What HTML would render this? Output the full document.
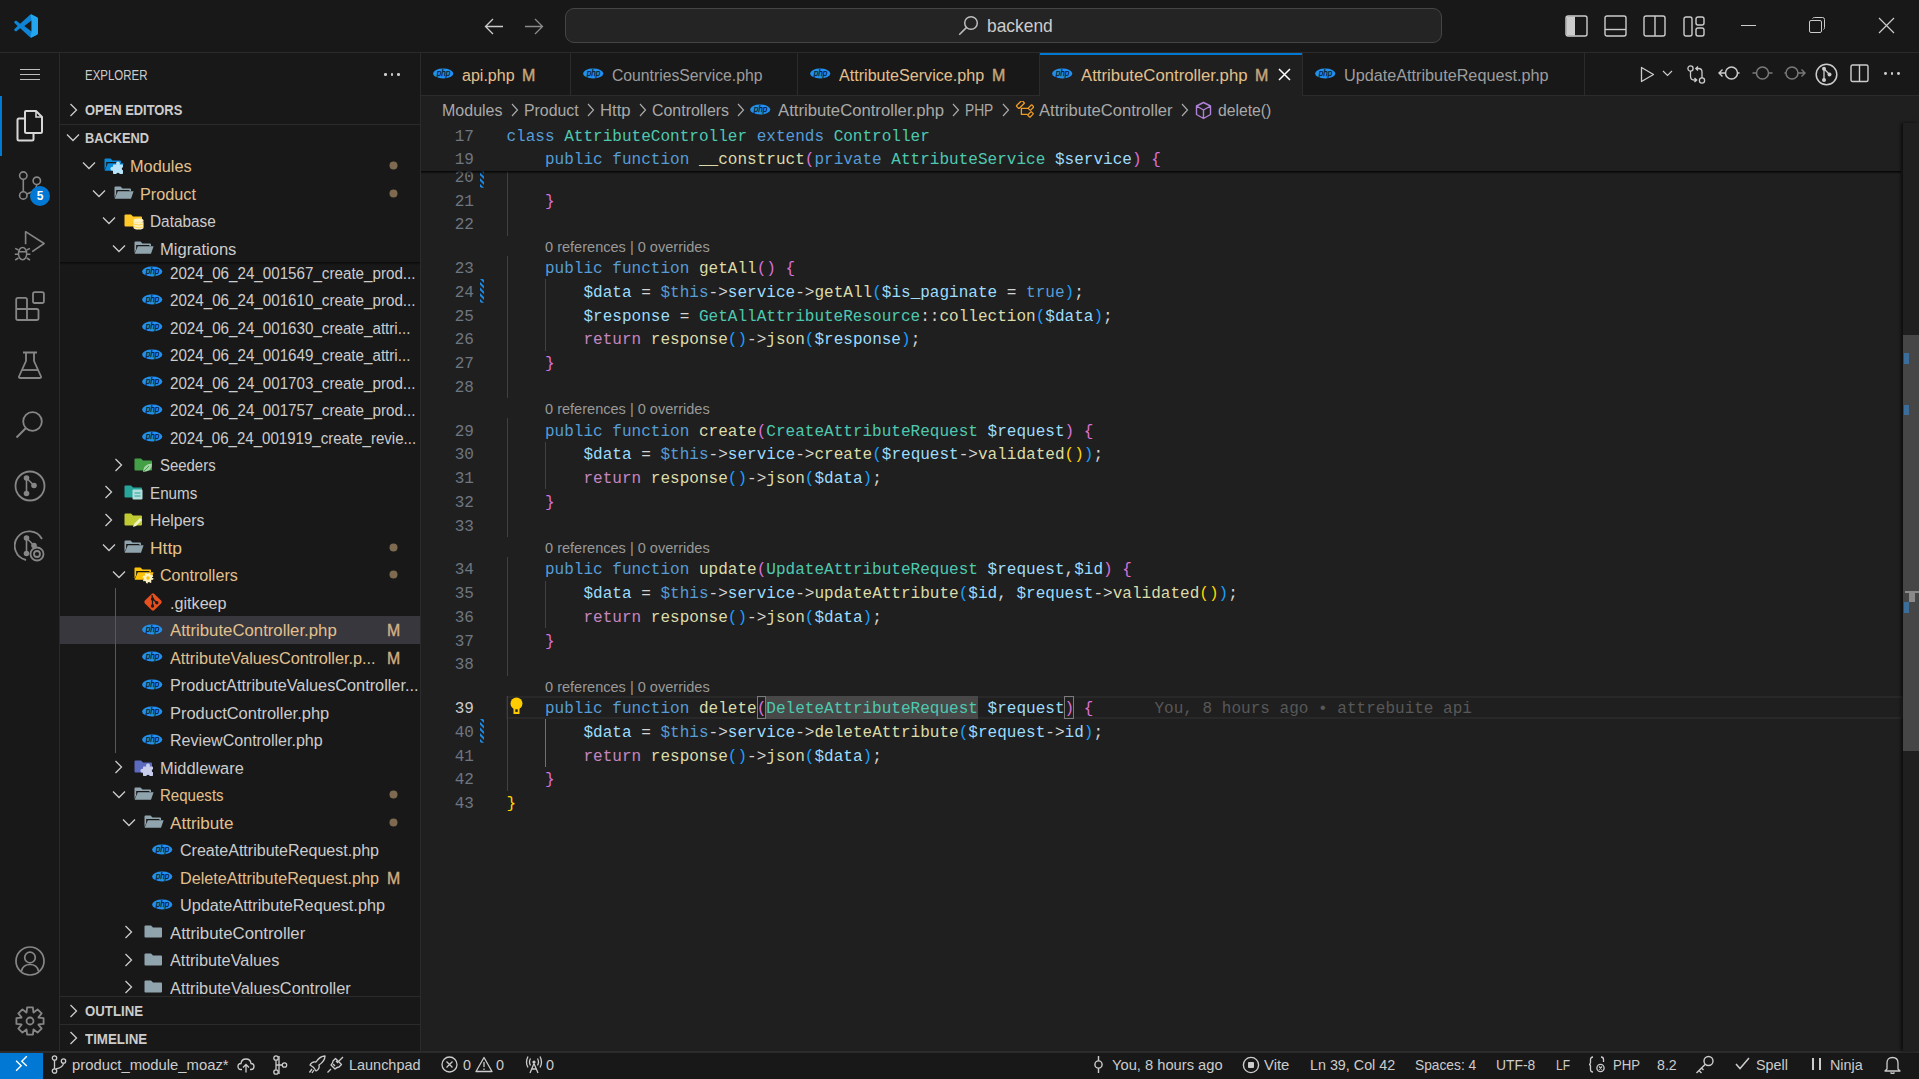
<!DOCTYPE html>
<html><head><meta charset="utf-8"><style>
html,body{margin:0;padding:0;width:1919px;height:1079px;overflow:hidden;background:#1f1f1f;position:relative;}
*{box-sizing:border-box;}
</style></head><body>
<div style="position:absolute;left:0px;top:0px;width:1919px;height:52px;background:#181818;"></div><div style="position:absolute;left:0px;top:52px;width:1919px;height:1px;background:#2b2b2b;"></div><div style="position:absolute;left:0px;top:53px;width:59px;height:998px;background:#181818;"></div><div style="position:absolute;left:59px;top:53px;width:1px;height:998px;background:#2b2b2b;"></div><div style="position:absolute;left:60px;top:53px;width:360px;height:998px;background:#181818;"></div><div style="position:absolute;left:420px;top:53px;width:1px;height:998px;background:#2b2b2b;"></div><div style="position:absolute;left:421px;top:53px;width:1498px;height:998px;background:#1f1f1f;"></div><div style="position:absolute;left:0px;top:1051px;width:1919px;height:1.5px;background:#2b2b2b;"></div><div style="position:absolute;left:0px;top:1052.5px;width:1919px;height:26.5px;background:#181818;"></div><svg style="position:absolute;left:14px;top:14px;" width="24" height="24" viewBox="0 0 24 24" fill="none">
<path d="M17.5 0.6 L23 3.2 Q24 3.8 24 5 V19 Q24 20.2 23 20.8 L17.5 23.4 Q16.6 23.8 15.8 23.1 L6.2 14.3 L2.4 17.2 Q1.8 17.6 1.2 17.1 L0.3 16.3 Q-0.1 15.8 0.3 15.3 L3.6 12 L0.3 8.7 Q-0.1 8.2 0.3 7.7 L1.2 6.9 Q1.8 6.4 2.4 6.8 L6.2 9.7 L15.8 0.9 Q16.6 0.2 17.5 0.6 Z M17.6 6.5 L10.3 12 L17.6 17.5 Z" fill="#0e84d4"/>
<path d="M17.5 0.6 L23 3.2 Q24 3.8 24 5 V19 Q24 20.2 23 20.8 L17.5 23.4 Q17 23.6 16.5 23.5 L17.6 17.5 V6.5 L16.5 0.5 Q17 0.4 17.5 0.6Z" fill="#24a6ee"/>
</svg><svg style="position:absolute;left:484px;top:18px;" width="20" height="17" viewBox="0 0 20 17" fill="none"><path d="M9 1 L1.5 8.5 L9 16 M1.5 8.5 H19" stroke="#cccccc" stroke-width="1.3"/></svg><svg style="position:absolute;left:524px;top:18px;" width="20" height="17" viewBox="0 0 20 17" fill="none"><path d="M11 1 L18.5 8.5 L11 16 M18.5 8.5 H1" stroke="#8a8a8a" stroke-width="1.3"/></svg><div style="position:absolute;left:565px;top:8px;width:877px;height:35px;background:#242424;border:1px solid #454545;border-radius:9px;"></div><svg style="position:absolute;left:958px;top:15px;" width="21" height="21" viewBox="0 0 21 21" fill="none"><circle cx="13" cy="8" r="6.3" stroke="#bdbdbd" stroke-width="1.5"/><path d="M8.6 12.4 L1.2 19.8" stroke="#bdbdbd" stroke-width="1.6"/></svg><div style="position:absolute;left:987px;top:15.100000000000001px;height:22px;line-height:22px;font-family:'Liberation Sans', sans-serif;font-size:19px;font-weight:normal;color:#cccccc;white-space:pre;transform:scaleX(0.9159);transform-origin:0 0;">backend</div><svg style="position:absolute;left:1565px;top:15px;" width="23" height="22" viewBox="0 0 23 22" fill="none"><rect x="1" y="1" width="21" height="20" rx="2" stroke="#cccccc" stroke-width="1.4"/><rect x="1.5" y="1.5" width="8.5" height="19" fill="#cccccc"/></svg><svg style="position:absolute;left:1604px;top:15px;" width="23" height="22" viewBox="0 0 23 22" fill="none"><rect x="1" y="1" width="21" height="20" rx="2" stroke="#cccccc" stroke-width="1.4"/><path d="M1 14.5 H22" stroke="#cccccc" stroke-width="1.4"/></svg><svg style="position:absolute;left:1643px;top:15px;" width="23" height="22" viewBox="0 0 23 22" fill="none"><rect x="1" y="1" width="21" height="20" rx="2" stroke="#cccccc" stroke-width="1.4"/><path d="M12 1 V21" stroke="#cccccc" stroke-width="1.4"/></svg><svg style="position:absolute;left:1683px;top:16px;" width="22" height="21" viewBox="0 0 22 21" fill="none"><rect x="1" y="1" width="8" height="19" rx="2" stroke="#cccccc" stroke-width="1.4"/><rect x="13" y="1" width="8" height="8" rx="2" stroke="#cccccc" stroke-width="1.4"/><rect x="13" y="12" width="8" height="8" rx="2" stroke="#cccccc" stroke-width="1.4"/></svg><div style="position:absolute;left:1741px;top:25px;width:15px;height:1px;background:#cccccc;"></div><svg style="position:absolute;left:1809px;top:17px;" width="17" height="17" viewBox="0 0 17 17" fill="none"><rect x="0.5" y="3.5" width="12" height="12" rx="1.5" stroke="#cccccc" stroke-width="1"/><path d="M3.5 1.5 Q4 0.5 5.5 0.5 H13.5 Q15.5 0.5 15.5 2.5 V10.5 Q15.5 12 14.5 12.5" stroke="#cccccc" stroke-width="1"/></svg><svg style="position:absolute;left:1878px;top:17px;" width="17" height="17" viewBox="0 0 17 17" fill="none"><path d="M1 1 L16 16 M16 1 L1 16" stroke="#cccccc" stroke-width="1.2"/></svg><div style="position:absolute;left:20px;top:69.0px;width:20px;height:1.2px;background:#bdbdbd;"></div><div style="position:absolute;left:20px;top:74.0px;width:20px;height:1.2px;background:#bdbdbd;"></div><div style="position:absolute;left:20px;top:79.0px;width:20px;height:1.2px;background:#bdbdbd;"></div><div style="position:absolute;left:0px;top:96px;width:2px;height:60px;background:#0078d4;"></div><svg style="position:absolute;left:16px;top:110px;" width="28" height="32" viewBox="0 0 28 32" fill="none"><path d="M9 2 Q9 1 10 1 H20 L26 7 V21.5 Q26 23 24.5 23 H10.5 Q9 23 9 21.5 Z" stroke="#d7d7d7" stroke-width="2" stroke-linejoin="round"/>
<path d="M20 1.5 V7 H25.5" stroke="#d7d7d7" stroke-width="1.6"/>
<path d="M9 8.5 H3 Q1.5 8.5 1.5 10 V29 Q1.5 30.5 3 30.5 H16 Q17.5 30.5 17.5 29 V23" stroke="#d7d7d7" stroke-width="2" stroke-linejoin="round"/></svg><svg style="position:absolute;left:16px;top:168px;" width="30" height="34" viewBox="0 0 30 34" fill="none"><circle cx="7.3" cy="7.6" r="3.7" stroke="#868686" stroke-width="1.6"/>
<circle cx="7.3" cy="27.4" r="3.7" stroke="#868686" stroke-width="1.6"/>
<circle cx="20.8" cy="12.8" r="3.7" stroke="#868686" stroke-width="1.6"/>
<path d="M7.3 11.3 V23.7 M20.8 16.5 Q20.8 23 10.8 26" stroke="#868686" stroke-width="1.6"/></svg><div style="position:absolute;left:30px;top:186px;width:20px;height:20px;border-radius:50%;background:#0078d4;color:#fff;font-family:'Liberation Sans',sans-serif;font-size:12px;font-weight:bold;line-height:20px;text-align:center;">5</div><svg style="position:absolute;left:14px;top:229px;" width="32" height="34" viewBox="0 0 32 34" fill="none"><path d="M11.6 15.3 V2.7 L30.1 14.5 L18.2 22.7" stroke="#868686" stroke-width="1.6" stroke-linejoin="round"/>
<ellipse cx="8.6" cy="24.6" rx="4.1" ry="6.2" stroke="#868686" stroke-width="1.5"/>
<path d="M4.6 22.7 H12.6 M1.2 19.4 L4.5 21 M16 19.4 L12.7 21 M0.8 25.3 H4.5 M16.4 25.3 H12.7 M1.2 31 L4.5 29 M16 31 L12.7 29" stroke="#868686" stroke-width="1.5"/></svg><svg style="position:absolute;left:14px;top:290px;" width="32" height="32" viewBox="0 0 32 32" fill="none"><path d="M4 7.8 H11.2 Q13 7.8 13 9.6 V19 H22.7 Q24.5 19 24.5 20.8 V28.2 Q24.5 30 22.7 30 H4 Q2.2 30 2.2 28.2 V9.6 Q2.2 7.8 4 7.8 Z M2.2 19 H13 V30" stroke="#868686" stroke-width="1.8" stroke-linejoin="round"/>
<rect x="19" y="2.2" width="10.9" height="10.8" rx="1.8" stroke="#868686" stroke-width="1.8"/></svg><svg style="position:absolute;left:17px;top:351px;" width="26" height="30" viewBox="0 0 26 30" fill="none"><path d="M6 1.5 H20 M9 2 V10 L2 25.5 Q1.5 27 3 27 H23 Q24.5 27 24 25.5 L17 10 V2" stroke="#868686" stroke-width="1.8" stroke-linejoin="round"/>
<path d="M5 19 H21" stroke="#868686" stroke-width="1.8"/></svg><svg style="position:absolute;left:15px;top:410px;" width="30" height="30" viewBox="0 0 30 30" fill="none"><circle cx="17.5" cy="11.5" r="9.3" stroke="#868686" stroke-width="1.8"/>
<path d="M11 18 L1.5 27.5" stroke="#868686" stroke-width="1.9"/></svg><svg style="position:absolute;left:14px;top:470px;" width="32" height="32" viewBox="0 0 32 32" fill="none"><circle cx="16" cy="16" r="14.5" stroke="#868686" stroke-width="1.8"/>
<circle cx="12.5" cy="8" r="2.8" fill="#868686"/><circle cx="20" cy="15.5" r="2.8" fill="#868686"/><circle cx="12.5" cy="23.5" r="2.8" fill="#868686"/>
<path d="M12.5 8 V23.5 M12.5 8 L20 15.5" stroke="#868686" stroke-width="1.6"/></svg><svg style="position:absolute;left:14px;top:530px;" width="34" height="34" viewBox="0 0 34 34" fill="none"><path d="M28 9 A14.5 14.5 0 1 0 12 30" stroke="#868686" stroke-width="1.8"/>
<circle cx="12.5" cy="8" r="2.8" fill="#868686"/><circle cx="20" cy="15.5" r="2.8" fill="#868686"/><circle cx="12.5" cy="23.5" r="2.8" fill="#868686"/>
<path d="M12.5 8 V23.5 M12.5 8 L20 15.5" stroke="#868686" stroke-width="1.6"/>
<circle cx="23" cy="24" r="6.5" fill="#181818" stroke="#868686" stroke-width="1.8"/><circle cx="23" cy="24" r="3" stroke="#868686" stroke-width="1.8"/></svg><svg style="position:absolute;left:15px;top:946px;" width="30" height="30" viewBox="0 0 30 30" fill="none"><circle cx="15" cy="15" r="14" stroke="#868686" stroke-width="1.7"/>
<circle cx="15" cy="11.5" r="5.3" stroke="#868686" stroke-width="1.7"/>
<path d="M6.5 25 Q8 18.5 15 18.5 Q22 18.5 23.5 25" stroke="#868686" stroke-width="1.7"/></svg><svg style="position:absolute;left:15px;top:1005.8px;" width="30" height="30" viewBox="0 0 30 30" fill="none"><polygon points="12.10,1.41 17.90,1.41 18.41,6.46 18.62,6.54 22.56,3.34 26.66,7.44 23.45,11.37 23.54,11.58 28.59,12.10 28.59,17.90 23.54,18.41 23.46,18.62 26.66,22.56 22.56,26.66 18.63,23.45 18.42,23.54 17.90,28.59 12.10,28.59 11.59,23.54 11.38,23.46 7.44,26.66 3.34,22.56 6.55,18.63 6.46,18.42 1.41,17.90 1.41,12.10 6.46,11.59 6.54,11.38 3.34,7.44 7.44,3.34 11.37,6.55 11.58,6.46" stroke="#868686" stroke-width="1.8" stroke-linejoin="round"/><circle cx="15" cy="15" r="3.5" stroke="#868686" stroke-width="1.8"/></svg><div style="position:absolute;left:85px;top:64.5px;height:20px;line-height:20px;font-family:'Liberation Sans', sans-serif;font-size:14px;font-weight:normal;color:#cccccc;white-space:pre;transform:scaleX(0.8197);transform-origin:0 0;">EXPLORER</div><div style="position:absolute;left:384px;top:73px;width:2.6px;height:2.6px;background:#cccccc;border-radius:50%;"></div><div style="position:absolute;left:390.5px;top:73px;width:2.6px;height:2.6px;background:#cccccc;border-radius:50%;"></div><div style="position:absolute;left:397px;top:73px;width:2.6px;height:2.6px;background:#cccccc;border-radius:50%;"></div><svg style="position:absolute;left:68.5px;top:102.5px;" width="9" height="14" viewBox="0 0 9 14" fill="none"><path d="M1.5 1 L7.5 7 L1.5 13" stroke="#cccccc" stroke-width="1.3"/></svg><div style="position:absolute;left:85px;top:100.0px;height:20px;line-height:20px;font-family:'Liberation Sans', sans-serif;font-size:14px;font-weight:bold;color:#cccccc;white-space:pre;transform:scaleX(0.9219);transform-origin:0 0;">OPEN EDITORS</div><div style="position:absolute;left:60px;top:124px;width:360px;height:1px;background:#2b2b2b;"></div><svg style="position:absolute;left:66px;top:133.0px;" width="14" height="9" viewBox="0 0 14 9" fill="none"><path d="M1 1.5 L7 7.5 L13 1.5" stroke="#cccccc" stroke-width="1.3"/></svg><div style="position:absolute;left:85px;top:128.0px;height:20px;line-height:20px;font-family:'Liberation Sans', sans-serif;font-size:14px;font-weight:bold;color:#cccccc;white-space:pre;transform:scaleX(0.9143);transform-origin:0 0;">BACKEND</div><div style="position:absolute;left:60px;top:616.0px;width:360px;height:27.5px;background:#37373d;"></div><svg style="position:absolute;left:142.29999999999998px;top:266.25px;" width="21" height="11" viewBox="0 0 21 11" fill="none"><ellipse cx="10.2" cy="5.5" rx="10.1" ry="5.1" fill="#2190ee"/><text x="10.4" y="8.3" text-anchor="middle" font-family="Liberation Sans" font-style="italic" font-size="8.5" textLength="13.5" lengthAdjust="spacingAndGlyphs" fill="#0c1b2b" stroke="#0c1b2b" stroke-width="0.25">php</text></svg><div style="position:absolute;left:170.39999999999998px;top:262.55px;height:22px;line-height:22px;font-family:'Liberation Sans', sans-serif;font-size:16px;font-weight:normal;color:#cccccc;white-space:pre;transform:scaleX(0.9482);transform-origin:0 0;">2024_06_24_001567_create_prod...</div><svg style="position:absolute;left:142.29999999999998px;top:293.75px;" width="21" height="11" viewBox="0 0 21 11" fill="none"><ellipse cx="10.2" cy="5.5" rx="10.1" ry="5.1" fill="#2190ee"/><text x="10.4" y="8.3" text-anchor="middle" font-family="Liberation Sans" font-style="italic" font-size="8.5" textLength="13.5" lengthAdjust="spacingAndGlyphs" fill="#0c1b2b" stroke="#0c1b2b" stroke-width="0.25">php</text></svg><div style="position:absolute;left:170.39999999999998px;top:290.05px;height:22px;line-height:22px;font-family:'Liberation Sans', sans-serif;font-size:16px;font-weight:normal;color:#cccccc;white-space:pre;transform:scaleX(0.9482);transform-origin:0 0;">2024_06_24_001610_create_prod...</div><svg style="position:absolute;left:142.29999999999998px;top:321.25px;" width="21" height="11" viewBox="0 0 21 11" fill="none"><ellipse cx="10.2" cy="5.5" rx="10.1" ry="5.1" fill="#2190ee"/><text x="10.4" y="8.3" text-anchor="middle" font-family="Liberation Sans" font-style="italic" font-size="8.5" textLength="13.5" lengthAdjust="spacingAndGlyphs" fill="#0c1b2b" stroke="#0c1b2b" stroke-width="0.25">php</text></svg><div style="position:absolute;left:170.39999999999998px;top:317.55px;height:22px;line-height:22px;font-family:'Liberation Sans', sans-serif;font-size:16px;font-weight:normal;color:#cccccc;white-space:pre;transform:scaleX(0.9481);transform-origin:0 0;">2024_06_24_001630_create_attri...</div><svg style="position:absolute;left:142.29999999999998px;top:348.75px;" width="21" height="11" viewBox="0 0 21 11" fill="none"><ellipse cx="10.2" cy="5.5" rx="10.1" ry="5.1" fill="#2190ee"/><text x="10.4" y="8.3" text-anchor="middle" font-family="Liberation Sans" font-style="italic" font-size="8.5" textLength="13.5" lengthAdjust="spacingAndGlyphs" fill="#0c1b2b" stroke="#0c1b2b" stroke-width="0.25">php</text></svg><div style="position:absolute;left:170.39999999999998px;top:345.05px;height:22px;line-height:22px;font-family:'Liberation Sans', sans-serif;font-size:16px;font-weight:normal;color:#cccccc;white-space:pre;transform:scaleX(0.9481);transform-origin:0 0;">2024_06_24_001649_create_attri...</div><svg style="position:absolute;left:142.29999999999998px;top:376.25px;" width="21" height="11" viewBox="0 0 21 11" fill="none"><ellipse cx="10.2" cy="5.5" rx="10.1" ry="5.1" fill="#2190ee"/><text x="10.4" y="8.3" text-anchor="middle" font-family="Liberation Sans" font-style="italic" font-size="8.5" textLength="13.5" lengthAdjust="spacingAndGlyphs" fill="#0c1b2b" stroke="#0c1b2b" stroke-width="0.25">php</text></svg><div style="position:absolute;left:170.39999999999998px;top:372.55px;height:22px;line-height:22px;font-family:'Liberation Sans', sans-serif;font-size:16px;font-weight:normal;color:#cccccc;white-space:pre;transform:scaleX(0.9482);transform-origin:0 0;">2024_06_24_001703_create_prod...</div><svg style="position:absolute;left:142.29999999999998px;top:403.75px;" width="21" height="11" viewBox="0 0 21 11" fill="none"><ellipse cx="10.2" cy="5.5" rx="10.1" ry="5.1" fill="#2190ee"/><text x="10.4" y="8.3" text-anchor="middle" font-family="Liberation Sans" font-style="italic" font-size="8.5" textLength="13.5" lengthAdjust="spacingAndGlyphs" fill="#0c1b2b" stroke="#0c1b2b" stroke-width="0.25">php</text></svg><div style="position:absolute;left:170.39999999999998px;top:400.05px;height:22px;line-height:22px;font-family:'Liberation Sans', sans-serif;font-size:16px;font-weight:normal;color:#cccccc;white-space:pre;transform:scaleX(0.9482);transform-origin:0 0;">2024_06_24_001757_create_prod...</div><svg style="position:absolute;left:142.29999999999998px;top:431.25px;" width="21" height="11" viewBox="0 0 21 11" fill="none"><ellipse cx="10.2" cy="5.5" rx="10.1" ry="5.1" fill="#2190ee"/><text x="10.4" y="8.3" text-anchor="middle" font-family="Liberation Sans" font-style="italic" font-size="8.5" textLength="13.5" lengthAdjust="spacingAndGlyphs" fill="#0c1b2b" stroke="#0c1b2b" stroke-width="0.25">php</text></svg><div style="position:absolute;left:170.39999999999998px;top:427.55px;height:22px;line-height:22px;font-family:'Liberation Sans', sans-serif;font-size:16px;font-weight:normal;color:#cccccc;white-space:pre;transform:scaleX(0.9409);transform-origin:0 0;">2024_06_24_001919_create_revie...</div><svg style="position:absolute;left:114.2px;top:457.75px;" width="9" height="14" viewBox="0 0 9 14" fill="none"><path d="M1.5 1 L7.5 7 L1.5 13" stroke="#cccccc" stroke-width="1.3"/></svg><svg style="position:absolute;left:133.6px;top:457.75px;" width="19" height="13" viewBox="0 0 19 13" fill="none"><path d="M0.5 1.5 Q0.5 0.5 1.5 0.5 H7 L9 2.5 H17 Q18 2.5 18 3.5 V11.5 Q18 12.5 17 12.5 H1.5 Q0.5 12.5 0.5 11.5 Z" fill="#43a047"/></svg><svg style="position:absolute;left:140.6px;top:461.75px;" width="12" height="11" viewBox="0 0 12 11" fill="none"><path d="M2 10 Q2 2 11 1.5 Q11 9.5 2 10 Z" fill="#a5d6a7"/><path d="M2.5 9.5 L8 4" stroke="#43a047" stroke-width="1"/></svg><div style="position:absolute;left:160.4px;top:455.05px;height:22px;line-height:22px;font-family:'Liberation Sans', sans-serif;font-size:16px;font-weight:normal;color:#cccccc;white-space:pre;transform:scaleX(0.9330);transform-origin:0 0;">Seeders</div><svg style="position:absolute;left:104.2px;top:485.25px;" width="9" height="14" viewBox="0 0 9 14" fill="none"><path d="M1.5 1 L7.5 7 L1.5 13" stroke="#cccccc" stroke-width="1.3"/></svg><svg style="position:absolute;left:123.60000000000001px;top:485.25px;" width="19" height="13" viewBox="0 0 19 13" fill="none"><path d="M0.5 1.5 Q0.5 0.5 1.5 0.5 H7 L9 2.5 H17 Q18 2.5 18 3.5 V11.5 Q18 12.5 17 12.5 H1.5 Q0.5 12.5 0.5 11.5 Z" fill="#26a69a"/></svg><svg style="position:absolute;left:131.60000000000002px;top:489.25px;" width="11" height="11" viewBox="0 0 11 11" fill="none"><rect x="0.5" y="0.5" width="10" height="10" rx="1" fill="#b2dfdb"/><path d="M2.5 4 H8.5 M2.5 7 H8.5" stroke="#26a69a" stroke-width="1.2"/></svg><div style="position:absolute;left:150.4px;top:482.55px;height:22px;line-height:22px;font-family:'Liberation Sans', sans-serif;font-size:16px;font-weight:normal;color:#cccccc;white-space:pre;transform:scaleX(0.9499);transform-origin:0 0;">Enums</div><svg style="position:absolute;left:104.2px;top:512.75px;" width="9" height="14" viewBox="0 0 9 14" fill="none"><path d="M1.5 1 L7.5 7 L1.5 13" stroke="#cccccc" stroke-width="1.3"/></svg><svg style="position:absolute;left:123.60000000000001px;top:512.75px;" width="19" height="13" viewBox="0 0 19 13" fill="none"><path d="M0.5 1.5 Q0.5 0.5 1.5 0.5 H7 L9 2.5 H17 Q18 2.5 18 3.5 V11.5 Q18 12.5 17 12.5 H1.5 Q0.5 12.5 0.5 11.5 Z" fill="#c0ca33"/></svg><svg style="position:absolute;left:131.60000000000002px;top:516.75px;" width="11" height="11" viewBox="0 0 11 11" fill="none"><path d="M1 10 L2 7 L8 1 L10 3 L4 9 Z" fill="#f0f4c3"/></svg><div style="position:absolute;left:150.4px;top:510.04999999999995px;height:22px;line-height:22px;font-family:'Liberation Sans', sans-serif;font-size:16px;font-weight:normal;color:#cccccc;white-space:pre;transform:scaleX(0.9848);transform-origin:0 0;">Helpers</div><svg style="position:absolute;left:101.7px;top:542.75px;" width="14" height="9" viewBox="0 0 14 9" fill="none"><path d="M1 1.5 L7 7.5 L13 1.5" stroke="#cccccc" stroke-width="1.3"/></svg><svg style="position:absolute;left:123.60000000000001px;top:539.75px;" width="20" height="13.5" viewBox="0 0 20 13.5" fill="none"><path d="M0.5 1.5 Q0.5 0.5 1.5 0.5 H6.5 L8.5 2.5 H16 Q17 2.5 17 3.5 V5 H3.5 L0.5 12 Z" fill="#90a4ae"/><path d="M2.2 4 H15.4 V5.2 H4 L2.2 9.8 Z" fill="#181818"/><path d="M3.8 5.3 H19.6 L17 12.8 H0.6 Z" fill="#90a4ae"/></svg><div style="position:absolute;left:150.4px;top:537.55px;height:22px;line-height:22px;font-family:'Liberation Sans', sans-serif;font-size:16px;font-weight:normal;color:#e2c08d;white-space:pre;transform:scaleX(1.0905);transform-origin:0 0;">Http</div><svg style="position:absolute;left:388px;top:541.75px;" width="11" height="11" viewBox="0 0 11 11" fill="none"><circle cx="5.5" cy="5.5" r="4" fill="#7d6a50"/></svg><svg style="position:absolute;left:111.7px;top:570.25px;" width="14" height="9" viewBox="0 0 14 9" fill="none"><path d="M1 1.5 L7 7.5 L13 1.5" stroke="#cccccc" stroke-width="1.3"/></svg><svg style="position:absolute;left:133.6px;top:567.25px;" width="20" height="13.5" viewBox="0 0 20 13.5" fill="none"><path d="M0.5 1.5 Q0.5 0.5 1.5 0.5 H6.5 L8.5 2.5 H16 Q17 2.5 17 3.5 V5 H3.5 L0.5 12 Z" fill="#ffc107"/><path d="M2.2 4 H15.4 V5.2 H4 L2.2 9.8 Z" fill="#181818"/><path d="M3.8 5.3 H19.6 L17 12.8 H0.6 Z" fill="#ffc107"/></svg><svg style="position:absolute;left:141.6px;top:571.75px;" width="12" height="12" viewBox="0 0 12 12" fill="none"><circle cx="6" cy="6" r="4.2" fill="#fff3c4" stroke="#fff3c4" stroke-width="2.4" stroke-dasharray="1.6 1.7"/><circle cx="6" cy="6" r="1.7" fill="#ffc107"/></svg><div style="position:absolute;left:160.4px;top:565.05px;height:22px;line-height:22px;font-family:'Liberation Sans', sans-serif;font-size:16px;font-weight:normal;color:#e2c08d;white-space:pre;transform:scaleX(1.0057);transform-origin:0 0;">Controllers</div><svg style="position:absolute;left:388px;top:569.25px;" width="11" height="11" viewBox="0 0 11 11" fill="none"><circle cx="5.5" cy="5.5" r="4" fill="#7d6a50"/></svg><svg style="position:absolute;left:142.6px;top:591.75px;" width="20" height="20" viewBox="0 0 20 20" fill="none"><rect x="3.3" y="3.3" width="13.4" height="13.4" rx="2" transform="rotate(45 10 10)" fill="#e8501e"/><path d="M9 3 L9.5 6 M9.5 6 V14.5 M9.5 6.5 L13.5 10.5" stroke="#1b1b1b" stroke-width="1.3"/><circle cx="9.5" cy="7" r="1.7" fill="#1b1b1b"/><circle cx="9.5" cy="14" r="1.7" fill="#1b1b1b"/><circle cx="13.8" cy="10.8" r="1.7" fill="#1b1b1b"/></svg><div style="position:absolute;left:170.39999999999998px;top:592.55px;height:22px;line-height:22px;font-family:'Liberation Sans', sans-serif;font-size:16px;font-weight:normal;color:#cccccc;white-space:pre;transform:scaleX(1.0099);transform-origin:0 0;">.gitkeep</div><svg style="position:absolute;left:142.29999999999998px;top:623.75px;" width="21" height="11" viewBox="0 0 21 11" fill="none"><ellipse cx="10.2" cy="5.5" rx="10.1" ry="5.1" fill="#2190ee"/><text x="10.4" y="8.3" text-anchor="middle" font-family="Liberation Sans" font-style="italic" font-size="8.5" textLength="13.5" lengthAdjust="spacingAndGlyphs" fill="#0c1b2b" stroke="#0c1b2b" stroke-width="0.25">php</text></svg><div style="position:absolute;left:170.39999999999998px;top:620.05px;height:22px;line-height:22px;font-family:'Liberation Sans', sans-serif;font-size:16px;font-weight:normal;color:#e2c08d;white-space:pre;transform:scaleX(1.0471);transform-origin:0 0;">AttributeController.php</div><div style="position:absolute;left:386.6px;top:620.05px;height:22px;line-height:22px;font-family:'Liberation Sans', sans-serif;font-size:16px;font-weight:normal;color:#e2c08d;white-space:pre;transform:scaleX(0.9904);transform-origin:0 0;opacity:0.9;-webkit-text-stroke:0.35px #e2c08d;">M</div><svg style="position:absolute;left:142.29999999999998px;top:651.25px;" width="21" height="11" viewBox="0 0 21 11" fill="none"><ellipse cx="10.2" cy="5.5" rx="10.1" ry="5.1" fill="#2190ee"/><text x="10.4" y="8.3" text-anchor="middle" font-family="Liberation Sans" font-style="italic" font-size="8.5" textLength="13.5" lengthAdjust="spacingAndGlyphs" fill="#0c1b2b" stroke="#0c1b2b" stroke-width="0.25">php</text></svg><div style="position:absolute;left:170.39999999999998px;top:647.55px;height:22px;line-height:22px;font-family:'Liberation Sans', sans-serif;font-size:16px;font-weight:normal;color:#e2c08d;white-space:pre;transform:scaleX(1.0154);transform-origin:0 0;">AttributeValuesController.p...</div><div style="position:absolute;left:386.6px;top:647.55px;height:22px;line-height:22px;font-family:'Liberation Sans', sans-serif;font-size:16px;font-weight:normal;color:#e2c08d;white-space:pre;transform:scaleX(0.9904);transform-origin:0 0;opacity:0.9;-webkit-text-stroke:0.35px #e2c08d;">M</div><svg style="position:absolute;left:142.29999999999998px;top:678.75px;" width="21" height="11" viewBox="0 0 21 11" fill="none"><ellipse cx="10.2" cy="5.5" rx="10.1" ry="5.1" fill="#2190ee"/><text x="10.4" y="8.3" text-anchor="middle" font-family="Liberation Sans" font-style="italic" font-size="8.5" textLength="13.5" lengthAdjust="spacingAndGlyphs" fill="#0c1b2b" stroke="#0c1b2b" stroke-width="0.25">php</text></svg><div style="position:absolute;left:170.39999999999998px;top:675.05px;height:22px;line-height:22px;font-family:'Liberation Sans', sans-serif;font-size:16px;font-weight:normal;color:#cccccc;white-space:pre;transform:scaleX(1.0173);transform-origin:0 0;">ProductAttributeValuesController...</div><svg style="position:absolute;left:142.29999999999998px;top:706.25px;" width="21" height="11" viewBox="0 0 21 11" fill="none"><ellipse cx="10.2" cy="5.5" rx="10.1" ry="5.1" fill="#2190ee"/><text x="10.4" y="8.3" text-anchor="middle" font-family="Liberation Sans" font-style="italic" font-size="8.5" textLength="13.5" lengthAdjust="spacingAndGlyphs" fill="#0c1b2b" stroke="#0c1b2b" stroke-width="0.25">php</text></svg><div style="position:absolute;left:170.39999999999998px;top:702.55px;height:22px;line-height:22px;font-family:'Liberation Sans', sans-serif;font-size:16px;font-weight:normal;color:#cccccc;white-space:pre;transform:scaleX(1.0287);transform-origin:0 0;">ProductController.php</div><svg style="position:absolute;left:142.29999999999998px;top:733.75px;" width="21" height="11" viewBox="0 0 21 11" fill="none"><ellipse cx="10.2" cy="5.5" rx="10.1" ry="5.1" fill="#2190ee"/><text x="10.4" y="8.3" text-anchor="middle" font-family="Liberation Sans" font-style="italic" font-size="8.5" textLength="13.5" lengthAdjust="spacingAndGlyphs" fill="#0c1b2b" stroke="#0c1b2b" stroke-width="0.25">php</text></svg><div style="position:absolute;left:170.39999999999998px;top:730.05px;height:22px;line-height:22px;font-family:'Liberation Sans', sans-serif;font-size:16px;font-weight:normal;color:#cccccc;white-space:pre;transform:scaleX(1.0041);transform-origin:0 0;">ReviewController.php</div><svg style="position:absolute;left:114.2px;top:760.25px;" width="9" height="14" viewBox="0 0 9 14" fill="none"><path d="M1.5 1 L7.5 7 L1.5 13" stroke="#cccccc" stroke-width="1.3"/></svg><svg style="position:absolute;left:133.6px;top:760.25px;" width="19" height="13" viewBox="0 0 19 13" fill="none"><path d="M0.5 1.5 Q0.5 0.5 1.5 0.5 H7 L9 2.5 H17 Q18 2.5 18 3.5 V11.5 Q18 12.5 17 12.5 H1.5 Q0.5 12.5 0.5 11.5 Z" fill="#5c6bc0"/></svg><svg style="position:absolute;left:140.0px;top:761.75px;" width="15" height="15" viewBox="0 0 15 15" fill="none"><rect x="3" y="4.5" width="10" height="9.5" rx="0.8" fill="#c9cdec"/><circle cx="8" cy="3.6" r="2" fill="#c9cdec"/><circle cx="2.4" cy="8.8" r="2" fill="#c9cdec"/><circle cx="13.6" cy="8.8" r="1.8" fill="#181818"/><circle cx="8" cy="14.6" r="1.8" fill="#181818"/></svg><div style="position:absolute;left:160.4px;top:757.55px;height:22px;line-height:22px;font-family:'Liberation Sans', sans-serif;font-size:16px;font-weight:normal;color:#cccccc;white-space:pre;transform:scaleX(1.0243);transform-origin:0 0;">Middleware</div><svg style="position:absolute;left:111.7px;top:790.25px;" width="14" height="9" viewBox="0 0 14 9" fill="none"><path d="M1 1.5 L7 7.5 L13 1.5" stroke="#cccccc" stroke-width="1.3"/></svg><svg style="position:absolute;left:133.6px;top:787.25px;" width="20" height="13.5" viewBox="0 0 20 13.5" fill="none"><path d="M0.5 1.5 Q0.5 0.5 1.5 0.5 H6.5 L8.5 2.5 H16 Q17 2.5 17 3.5 V5 H3.5 L0.5 12 Z" fill="#90a4ae"/><path d="M2.2 4 H15.4 V5.2 H4 L2.2 9.8 Z" fill="#181818"/><path d="M3.8 5.3 H19.6 L17 12.8 H0.6 Z" fill="#90a4ae"/></svg><div style="position:absolute;left:160.4px;top:785.05px;height:22px;line-height:22px;font-family:'Liberation Sans', sans-serif;font-size:16px;font-weight:normal;color:#e2c08d;white-space:pre;transform:scaleX(0.9409);transform-origin:0 0;">Requests</div><svg style="position:absolute;left:388px;top:789.25px;" width="11" height="11" viewBox="0 0 11 11" fill="none"><circle cx="5.5" cy="5.5" r="4" fill="#7d6a50"/></svg><svg style="position:absolute;left:121.69999999999999px;top:817.75px;" width="14" height="9" viewBox="0 0 14 9" fill="none"><path d="M1 1.5 L7 7.5 L13 1.5" stroke="#cccccc" stroke-width="1.3"/></svg><svg style="position:absolute;left:143.6px;top:814.75px;" width="20" height="13.5" viewBox="0 0 20 13.5" fill="none"><path d="M0.5 1.5 Q0.5 0.5 1.5 0.5 H6.5 L8.5 2.5 H16 Q17 2.5 17 3.5 V5 H3.5 L0.5 12 Z" fill="#90a4ae"/><path d="M2.2 4 H15.4 V5.2 H4 L2.2 9.8 Z" fill="#181818"/><path d="M3.8 5.3 H19.6 L17 12.8 H0.6 Z" fill="#90a4ae"/></svg><div style="position:absolute;left:170.39999999999998px;top:812.55px;height:22px;line-height:22px;font-family:'Liberation Sans', sans-serif;font-size:16px;font-weight:normal;color:#e2c08d;white-space:pre;transform:scaleX(1.0672);transform-origin:0 0;">Attribute</div><svg style="position:absolute;left:388px;top:816.75px;" width="11" height="11" viewBox="0 0 11 11" fill="none"><circle cx="5.5" cy="5.5" r="4" fill="#7d6a50"/></svg><svg style="position:absolute;left:152.29999999999998px;top:843.75px;" width="21" height="11" viewBox="0 0 21 11" fill="none"><ellipse cx="10.2" cy="5.5" rx="10.1" ry="5.1" fill="#2190ee"/><text x="10.4" y="8.3" text-anchor="middle" font-family="Liberation Sans" font-style="italic" font-size="8.5" textLength="13.5" lengthAdjust="spacingAndGlyphs" fill="#0c1b2b" stroke="#0c1b2b" stroke-width="0.25">php</text></svg><div style="position:absolute;left:180.39999999999998px;top:840.05px;height:22px;line-height:22px;font-family:'Liberation Sans', sans-serif;font-size:16px;font-weight:normal;color:#cccccc;white-space:pre;transform:scaleX(1.0033);transform-origin:0 0;">CreateAttributeRequest.php</div><svg style="position:absolute;left:152.29999999999998px;top:871.25px;" width="21" height="11" viewBox="0 0 21 11" fill="none"><ellipse cx="10.2" cy="5.5" rx="10.1" ry="5.1" fill="#2190ee"/><text x="10.4" y="8.3" text-anchor="middle" font-family="Liberation Sans" font-style="italic" font-size="8.5" textLength="13.5" lengthAdjust="spacingAndGlyphs" fill="#0c1b2b" stroke="#0c1b2b" stroke-width="0.25">php</text></svg><div style="position:absolute;left:180.39999999999998px;top:867.55px;height:22px;line-height:22px;font-family:'Liberation Sans', sans-serif;font-size:16px;font-weight:normal;color:#e2c08d;white-space:pre;transform:scaleX(1.0123);transform-origin:0 0;">DeleteAttributeRequest.php</div><div style="position:absolute;left:386.6px;top:867.55px;height:22px;line-height:22px;font-family:'Liberation Sans', sans-serif;font-size:16px;font-weight:normal;color:#e2c08d;white-space:pre;transform:scaleX(0.9904);transform-origin:0 0;opacity:0.9;-webkit-text-stroke:0.35px #e2c08d;">M</div><svg style="position:absolute;left:152.29999999999998px;top:898.75px;" width="21" height="11" viewBox="0 0 21 11" fill="none"><ellipse cx="10.2" cy="5.5" rx="10.1" ry="5.1" fill="#2190ee"/><text x="10.4" y="8.3" text-anchor="middle" font-family="Liberation Sans" font-style="italic" font-size="8.5" textLength="13.5" lengthAdjust="spacingAndGlyphs" fill="#0c1b2b" stroke="#0c1b2b" stroke-width="0.25">php</text></svg><div style="position:absolute;left:180.39999999999998px;top:895.05px;height:22px;line-height:22px;font-family:'Liberation Sans', sans-serif;font-size:16px;font-weight:normal;color:#cccccc;white-space:pre;transform:scaleX(1.0152);transform-origin:0 0;">UpdateAttributeRequest.php</div><svg style="position:absolute;left:124.19999999999999px;top:925.25px;" width="9" height="14" viewBox="0 0 9 14" fill="none"><path d="M1.5 1 L7.5 7 L1.5 13" stroke="#cccccc" stroke-width="1.3"/></svg><svg style="position:absolute;left:143.6px;top:925.25px;" width="19" height="13" viewBox="0 0 19 13" fill="none"><path d="M0.5 1.5 Q0.5 0.5 1.5 0.5 H7 L9 2.5 H17 Q18 2.5 18 3.5 V11.5 Q18 12.5 17 12.5 H1.5 Q0.5 12.5 0.5 11.5 Z" fill="#90a4ae"/></svg><div style="position:absolute;left:170.39999999999998px;top:922.55px;height:22px;line-height:22px;font-family:'Liberation Sans', sans-serif;font-size:16px;font-weight:normal;color:#cccccc;white-space:pre;transform:scaleX(1.0492);transform-origin:0 0;">AttributeController</div><svg style="position:absolute;left:124.19999999999999px;top:952.75px;" width="9" height="14" viewBox="0 0 9 14" fill="none"><path d="M1.5 1 L7.5 7 L1.5 13" stroke="#cccccc" stroke-width="1.3"/></svg><svg style="position:absolute;left:143.6px;top:952.75px;" width="19" height="13" viewBox="0 0 19 13" fill="none"><path d="M0.5 1.5 Q0.5 0.5 1.5 0.5 H7 L9 2.5 H17 Q18 2.5 18 3.5 V11.5 Q18 12.5 17 12.5 H1.5 Q0.5 12.5 0.5 11.5 Z" fill="#90a4ae"/></svg><div style="position:absolute;left:170.39999999999998px;top:950.05px;height:22px;line-height:22px;font-family:'Liberation Sans', sans-serif;font-size:16px;font-weight:normal;color:#cccccc;white-space:pre;transform:scaleX(1.0184);transform-origin:0 0;">AttributeValues</div><svg style="position:absolute;left:124.19999999999999px;top:980.25px;" width="9" height="14" viewBox="0 0 9 14" fill="none"><path d="M1.5 1 L7.5 7 L1.5 13" stroke="#cccccc" stroke-width="1.3"/></svg><svg style="position:absolute;left:143.6px;top:980.25px;" width="19" height="13" viewBox="0 0 19 13" fill="none"><path d="M0.5 1.5 Q0.5 0.5 1.5 0.5 H7 L9 2.5 H17 Q18 2.5 18 3.5 V11.5 Q18 12.5 17 12.5 H1.5 Q0.5 12.5 0.5 11.5 Z" fill="#90a4ae"/></svg><div style="position:absolute;left:170.39999999999998px;top:977.55px;height:22px;line-height:22px;font-family:'Liberation Sans', sans-serif;font-size:16px;font-weight:normal;color:#cccccc;white-space:pre;transform:scaleX(1.0233);transform-origin:0 0;">AttributeValuesController</div><div style="position:absolute;left:115px;top:588px;width:1px;height:165px;background:#585858;"></div><div style="position:absolute;left:60px;top:152px;width:360px;height:110px;background:#181818;"></div><div style="position:absolute;left:60px;top:262px;width:360px;height:3px;background:linear-gradient(#0a0a0a,rgba(0,0,0,0));"></div><svg style="position:absolute;left:81.7px;top:161.25px;" width="14" height="9" viewBox="0 0 14 9" fill="none"><path d="M1 1.5 L7 7.5 L13 1.5" stroke="#cccccc" stroke-width="1.3"/></svg><svg style="position:absolute;left:103.60000000000001px;top:158.25px;" width="20" height="13.5" viewBox="0 0 20 13.5" fill="none"><path d="M0.5 1.5 Q0.5 0.5 1.5 0.5 H6.5 L8.5 2.5 H16 Q17 2.5 17 3.5 V5 H3.5 L0.5 12 Z" fill="#0a8ad8"/><path d="M2.2 4 H15.4 V5.2 H4 L2.2 9.8 Z" fill="#181818"/><path d="M3.8 5.3 H19.6 L17 12.8 H0.6 Z" fill="#0a8ad8"/></svg><svg style="position:absolute;left:110.00000000000001px;top:160.0px;" width="15" height="15" viewBox="0 0 15 15" fill="none"><rect x="3" y="4.5" width="10" height="9.5" rx="0.8" fill="#b8e4fa"/><circle cx="8" cy="3.6" r="2" fill="#b8e4fa"/><circle cx="2.4" cy="8.8" r="2" fill="#b8e4fa"/><circle cx="13.6" cy="8.8" r="1.8" fill="#181818"/><circle cx="8" cy="14.6" r="1.8" fill="#181818"/></svg><div style="position:absolute;left:130.4px;top:156.05px;height:22px;line-height:22px;font-family:'Liberation Sans', sans-serif;font-size:16px;font-weight:normal;color:#e2c08d;white-space:pre;transform:scaleX(1.0184);transform-origin:0 0;">Modules</div><svg style="position:absolute;left:388px;top:160.25px;" width="11" height="11" viewBox="0 0 11 11" fill="none"><circle cx="5.5" cy="5.5" r="4" fill="#7d6a50"/></svg><svg style="position:absolute;left:91.7px;top:188.75px;" width="14" height="9" viewBox="0 0 14 9" fill="none"><path d="M1 1.5 L7 7.5 L13 1.5" stroke="#cccccc" stroke-width="1.3"/></svg><svg style="position:absolute;left:113.60000000000001px;top:185.75px;" width="20" height="13.5" viewBox="0 0 20 13.5" fill="none"><path d="M0.5 1.5 Q0.5 0.5 1.5 0.5 H6.5 L8.5 2.5 H16 Q17 2.5 17 3.5 V5 H3.5 L0.5 12 Z" fill="#90a4ae"/><path d="M2.2 4 H15.4 V5.2 H4 L2.2 9.8 Z" fill="#181818"/><path d="M3.8 5.3 H19.6 L17 12.8 H0.6 Z" fill="#90a4ae"/></svg><div style="position:absolute;left:140.4px;top:183.55px;height:22px;line-height:22px;font-family:'Liberation Sans', sans-serif;font-size:16px;font-weight:normal;color:#e2c08d;white-space:pre;transform:scaleX(1.0138);transform-origin:0 0;">Product</div><svg style="position:absolute;left:388px;top:187.75px;" width="11" height="11" viewBox="0 0 11 11" fill="none"><circle cx="5.5" cy="5.5" r="4" fill="#7d6a50"/></svg><svg style="position:absolute;left:101.7px;top:216.25px;" width="14" height="9" viewBox="0 0 14 9" fill="none"><path d="M1 1.5 L7 7.5 L13 1.5" stroke="#cccccc" stroke-width="1.3"/></svg><svg style="position:absolute;left:123.60000000000001px;top:213.75px;" width="19" height="13" viewBox="0 0 19 13" fill="none"><path d="M0.5 1.5 Q0.5 0.5 1.5 0.5 H7 L9 2.5 H17 Q18 2.5 18 3.5 V11.5 Q18 12.5 17 12.5 H1.5 Q0.5 12.5 0.5 11.5 Z" fill="#ffca28"/></svg><svg style="position:absolute;left:132.60000000000002px;top:217.75px;" width="11" height="12" viewBox="0 0 11 12" fill="none"><ellipse cx="5.5" cy="2.5" rx="5" ry="2" fill="#fff3c4"/><path d="M0.5 3 V9.5 Q0.5 11.5 5.5 11.5 Q10.5 11.5 10.5 9.5 V3 Q10.5 4.5 5.5 4.5 Q0.5 4.5 0.5 3Z" fill="#fff3c4"/><path d="M0.5 6 Q5.5 8 10.5 6 M0.5 8.8 Q5.5 10.8 10.5 8.8" stroke="#ffca28" stroke-width="0.8"/></svg><div style="position:absolute;left:150.4px;top:211.05px;height:22px;line-height:22px;font-family:'Liberation Sans', sans-serif;font-size:16px;font-weight:normal;color:#cccccc;white-space:pre;transform:scaleX(0.9606);transform-origin:0 0;">Database</div><svg style="position:absolute;left:111.7px;top:243.75px;" width="14" height="9" viewBox="0 0 14 9" fill="none"><path d="M1 1.5 L7 7.5 L13 1.5" stroke="#cccccc" stroke-width="1.3"/></svg><svg style="position:absolute;left:133.6px;top:240.75px;" width="20" height="13.5" viewBox="0 0 20 13.5" fill="none"><path d="M0.5 1.5 Q0.5 0.5 1.5 0.5 H6.5 L8.5 2.5 H16 Q17 2.5 17 3.5 V5 H3.5 L0.5 12 Z" fill="#90a4ae"/><path d="M2.2 4 H15.4 V5.2 H4 L2.2 9.8 Z" fill="#181818"/><path d="M3.8 5.3 H19.6 L17 12.8 H0.6 Z" fill="#90a4ae"/></svg><div style="position:absolute;left:160.4px;top:238.55px;height:22px;line-height:22px;font-family:'Liberation Sans', sans-serif;font-size:16px;font-weight:normal;color:#cccccc;white-space:pre;transform:scaleX(1.0351);transform-origin:0 0;">Migrations</div><div style="position:absolute;left:60px;top:996px;width:360px;height:1px;background:#2b2b2b;"></div><div style="position:absolute;left:60px;top:997px;width:360px;height:54px;background:#181818;"></div><svg style="position:absolute;left:68.5px;top:1003.5px;" width="9" height="14" viewBox="0 0 9 14" fill="none"><path d="M1.5 1 L7.5 7 L1.5 13" stroke="#cccccc" stroke-width="1.3"/></svg><div style="position:absolute;left:85px;top:1001.0px;height:20px;line-height:20px;font-family:'Liberation Sans', sans-serif;font-size:14px;font-weight:bold;color:#cccccc;white-space:pre;transform:scaleX(0.9438);transform-origin:0 0;">OUTLINE</div><div style="position:absolute;left:60px;top:1024px;width:360px;height:1px;background:#2b2b2b;"></div><svg style="position:absolute;left:68.5px;top:1031px;" width="9" height="14" viewBox="0 0 9 14" fill="none"><path d="M1.5 1 L7.5 7 L1.5 13" stroke="#cccccc" stroke-width="1.3"/></svg><div style="position:absolute;left:85px;top:1028.5px;height:20px;line-height:20px;font-family:'Liberation Sans', sans-serif;font-size:14px;font-weight:bold;color:#cccccc;white-space:pre;transform:scaleX(0.9519);transform-origin:0 0;">TIMELINE</div><div style="position:absolute;left:421px;top:53px;width:1498px;height:42px;background:#181818;"></div><div style="position:absolute;left:421px;top:95px;width:1498px;height:1px;background:#2b2b2b;"></div><div style="position:absolute;left:570px;top:53px;width:1px;height:42px;background:#2b2b2b;"></div><svg style="position:absolute;left:433px;top:68.0px;" width="21" height="11" viewBox="0 0 21 11" fill="none"><ellipse cx="10.2" cy="5.5" rx="10.1" ry="5.1" fill="#2190ee"/><text x="10.4" y="8.3" text-anchor="middle" font-family="Liberation Sans" font-style="italic" font-size="8.5" textLength="13.5" lengthAdjust="spacingAndGlyphs" fill="#0c1b2b" stroke="#0c1b2b" stroke-width="0.25">php</text></svg><div style="position:absolute;left:462px;top:65.1px;height:22px;line-height:22px;font-family:'Liberation Sans', sans-serif;font-size:16px;font-weight:normal;color:#e2c08d;white-space:pre;transform:scaleX(1.0019);transform-origin:0 0;">api.php</div><div style="position:absolute;left:522.1px;top:65.1px;height:22px;line-height:22px;font-family:'Liberation Sans', sans-serif;font-size:16px;font-weight:normal;color:#e2c08d;white-space:pre;transform:scaleX(0.9979);transform-origin:0 0;opacity:0.85;-webkit-text-stroke:0.4px #e2c08d;">M</div><div style="position:absolute;left:797px;top:53px;width:1px;height:42px;background:#2b2b2b;"></div><svg style="position:absolute;left:583px;top:68.0px;" width="21" height="11" viewBox="0 0 21 11" fill="none"><ellipse cx="10.2" cy="5.5" rx="10.1" ry="5.1" fill="#2190ee"/><text x="10.4" y="8.3" text-anchor="middle" font-family="Liberation Sans" font-style="italic" font-size="8.5" textLength="13.5" lengthAdjust="spacingAndGlyphs" fill="#0c1b2b" stroke="#0c1b2b" stroke-width="0.25">php</text></svg><div style="position:absolute;left:612px;top:65.1px;height:22px;line-height:22px;font-family:'Liberation Sans', sans-serif;font-size:16px;font-weight:normal;color:#9d9d9d;white-space:pre;transform:scaleX(0.9832);transform-origin:0 0;">CountriesService.php</div><div style="position:absolute;left:1039px;top:53px;width:1px;height:42px;background:#2b2b2b;"></div><svg style="position:absolute;left:810px;top:68.0px;" width="21" height="11" viewBox="0 0 21 11" fill="none"><ellipse cx="10.2" cy="5.5" rx="10.1" ry="5.1" fill="#2190ee"/><text x="10.4" y="8.3" text-anchor="middle" font-family="Liberation Sans" font-style="italic" font-size="8.5" textLength="13.5" lengthAdjust="spacingAndGlyphs" fill="#0c1b2b" stroke="#0c1b2b" stroke-width="0.25">php</text></svg><div style="position:absolute;left:839px;top:65.1px;height:22px;line-height:22px;font-family:'Liberation Sans', sans-serif;font-size:16px;font-weight:normal;color:#e2c08d;white-space:pre;transform:scaleX(1.0071);transform-origin:0 0;">AttributeService.php</div><div style="position:absolute;left:991.6px;top:65.1px;height:22px;line-height:22px;font-family:'Liberation Sans', sans-serif;font-size:16px;font-weight:normal;color:#e2c08d;white-space:pre;transform:scaleX(0.9979);transform-origin:0 0;opacity:0.85;-webkit-text-stroke:0.4px #e2c08d;">M</div><div style="position:absolute;left:1039.5px;top:53px;width:262.5px;height:43px;background:#1f1f1f;"></div><div style="position:absolute;left:1039.5px;top:53px;width:262.5px;height:1.6px;background:#0078d4;"></div><div style="position:absolute;left:1302px;top:53px;width:1px;height:42px;background:#2b2b2b;"></div><svg style="position:absolute;left:1051.5px;top:68.0px;" width="21" height="11" viewBox="0 0 21 11" fill="none"><ellipse cx="10.2" cy="5.5" rx="10.1" ry="5.1" fill="#2190ee"/><text x="10.4" y="8.3" text-anchor="middle" font-family="Liberation Sans" font-style="italic" font-size="8.5" textLength="13.5" lengthAdjust="spacingAndGlyphs" fill="#0c1b2b" stroke="#0c1b2b" stroke-width="0.25">php</text></svg><div style="position:absolute;left:1080.5px;top:65.1px;height:22px;line-height:22px;font-family:'Liberation Sans', sans-serif;font-size:16px;font-weight:normal;color:#e2c08d;white-space:pre;transform:scaleX(1.0458);transform-origin:0 0;">AttributeController.php</div><div style="position:absolute;left:1254.5px;top:65.1px;height:22px;line-height:22px;font-family:'Liberation Sans', sans-serif;font-size:16px;font-weight:normal;color:#e2c08d;white-space:pre;transform:scaleX(0.9979);transform-origin:0 0;opacity:0.85;-webkit-text-stroke:0.4px #e2c08d;">M</div><svg style="position:absolute;left:1278px;top:68px;" width="13" height="13" viewBox="0 0 13 13" fill="none"><path d="M1 1 L12 12 M12 1 L1 12" stroke="#ffffff" stroke-width="1.5"/></svg><div style="position:absolute;left:1584px;top:53px;width:1px;height:42px;background:#2b2b2b;"></div><svg style="position:absolute;left:1315px;top:68.0px;" width="21" height="11" viewBox="0 0 21 11" fill="none"><ellipse cx="10.2" cy="5.5" rx="10.1" ry="5.1" fill="#2190ee"/><text x="10.4" y="8.3" text-anchor="middle" font-family="Liberation Sans" font-style="italic" font-size="8.5" textLength="13.5" lengthAdjust="spacingAndGlyphs" fill="#0c1b2b" stroke="#0c1b2b" stroke-width="0.25">php</text></svg><div style="position:absolute;left:1344px;top:65.1px;height:22px;line-height:22px;font-family:'Liberation Sans', sans-serif;font-size:16px;font-weight:normal;color:#9d9d9d;white-space:pre;transform:scaleX(1.0133);transform-origin:0 0;">UpdateAttributeRequest.php</div><svg style="position:absolute;left:1640px;top:66px;" width="15" height="17" viewBox="0 0 15 17" fill="none"><path d="M1.5 1.5 L13.5 8.5 L1.5 15.5 Z" stroke="#cccccc" stroke-width="1.3" stroke-linejoin="round"/></svg><svg style="position:absolute;left:1662px;top:70px;" width="11" height="7" viewBox="0 0 11 7" fill="none"><path d="M1 1 L5.5 5.5 L10 1" stroke="#cccccc" stroke-width="1.2"/></svg><svg style="position:absolute;left:1687px;top:65px;" width="19" height="19" viewBox="0 0 19 19" fill="none"><circle cx="3.5" cy="3.5" r="2.6" stroke="#cccccc" stroke-width="1.3"/><circle cx="15" cy="15.5" r="2.6" stroke="#cccccc" stroke-width="1.3"/>
<path d="M3.5 6 V11 Q3.5 15 7 15 H9.5 M7.5 13 L9.7 15 L7.5 17 M15 13 V7 Q15 3.5 11.5 3.5 H9 M11 1.5 L8.8 3.5 L11 5.5" stroke="#cccccc" stroke-width="1.3"/></svg><svg style="position:absolute;left:1718px;top:64px;" width="22" height="18" viewBox="0 0 22 18" fill="none"><circle cx="13.5" cy="9" r="6" stroke="#cccccc" stroke-width="1.5"/><path d="M7.5 9 H1.5 M4.5 5.5 L1 9 L4.5 12.5 M19.5 9 H21.5" stroke="#cccccc" stroke-width="1.4"/></svg><svg style="position:absolute;left:1752px;top:64px;" width="21" height="18" viewBox="0 0 21 18" fill="none"><circle cx="10.5" cy="9" r="6" stroke="#7a7a7a" stroke-width="1.5"/><path d="M4.5 9 H0.5 M16.5 9 H20.5" stroke="#7a7a7a" stroke-width="1.4"/></svg><svg style="position:absolute;left:1784px;top:64px;" width="22" height="18" viewBox="0 0 22 18" fill="none"><circle cx="8" cy="9" r="6" stroke="#7a7a7a" stroke-width="1.5"/><path d="M14 9 H20.5 M17.5 5.5 L21 9 L17.5 12.5 M2 9 H0.5" stroke="#7a7a7a" stroke-width="1.4"/></svg><svg style="position:absolute;left:1815px;top:63px;" width="23" height="23" viewBox="0 0 23 23" fill="none"><circle cx="11.5" cy="11.5" r="10.3" stroke="#cccccc" stroke-width="1.5"/>
<circle cx="9" cy="5.8" r="2" fill="#cccccc"/><circle cx="14.5" cy="11.5" r="2" fill="#cccccc"/><circle cx="9" cy="17" r="2" fill="#cccccc"/>
<path d="M9 5.8 V17 M9 5.8 L14.5 11.5" stroke="#cccccc" stroke-width="1.3"/></svg><svg style="position:absolute;left:1850px;top:64px;" width="19" height="19" viewBox="0 0 19 19" fill="none"><rect x="1" y="1" width="17" height="16.5" rx="1.5" stroke="#cccccc" stroke-width="1.4"/><path d="M9.5 1 V17.5" stroke="#cccccc" stroke-width="1.4"/></svg><div style="position:absolute;left:1884px;top:72px;width:2.8px;height:2.8px;background:#cccccc;border-radius:50%;"></div><div style="position:absolute;left:1890.5px;top:72px;width:2.8px;height:2.8px;background:#cccccc;border-radius:50%;"></div><div style="position:absolute;left:1897px;top:72px;width:2.8px;height:2.8px;background:#cccccc;border-radius:50%;"></div><div style="position:absolute;left:442px;top:100.2px;height:22px;line-height:22px;font-family:'Liberation Sans', sans-serif;font-size:16px;font-weight:normal;color:#a9a9a9;white-space:pre;transform:scaleX(1.0003);transform-origin:0 0;">Modules</div><div style="position:absolute;left:524.4px;top:100.2px;height:22px;line-height:22px;font-family:'Liberation Sans', sans-serif;font-size:16px;font-weight:normal;color:#a9a9a9;white-space:pre;transform:scaleX(0.9902);transform-origin:0 0;">Product</div><div style="position:absolute;left:600px;top:100.2px;height:22px;line-height:22px;font-family:'Liberation Sans', sans-serif;font-size:16px;font-weight:normal;color:#a9a9a9;white-space:pre;transform:scaleX(1.0428);transform-origin:0 0;">Http</div><div style="position:absolute;left:652px;top:100.2px;height:22px;line-height:22px;font-family:'Liberation Sans', sans-serif;font-size:16px;font-weight:normal;color:#a9a9a9;white-space:pre;transform:scaleX(0.9954);transform-origin:0 0;">Controllers</div><svg style="position:absolute;left:510.5px;top:103px;" width="8" height="14" viewBox="0 0 8 14" fill="none"><path d="M1 1 L6.5 7 L1 13" stroke="#a9a9a9" stroke-width="1.2"/></svg><svg style="position:absolute;left:587px;top:103px;" width="8" height="14" viewBox="0 0 8 14" fill="none"><path d="M1 1 L6.5 7 L1 13" stroke="#a9a9a9" stroke-width="1.2"/></svg><svg style="position:absolute;left:638.5px;top:103px;" width="8" height="14" viewBox="0 0 8 14" fill="none"><path d="M1 1 L6.5 7 L1 13" stroke="#a9a9a9" stroke-width="1.2"/></svg><svg style="position:absolute;left:736.5px;top:103px;" width="8" height="14" viewBox="0 0 8 14" fill="none"><path d="M1 1 L6.5 7 L1 13" stroke="#a9a9a9" stroke-width="1.2"/></svg><svg style="position:absolute;left:749.5px;top:104.0px;" width="21" height="11" viewBox="0 0 21 11" fill="none"><ellipse cx="10.2" cy="5.5" rx="10.1" ry="5.1" fill="#2190ee"/><text x="10.4" y="8.3" text-anchor="middle" font-family="Liberation Sans" font-style="italic" font-size="8.5" textLength="13.5" lengthAdjust="spacingAndGlyphs" fill="#0c1b2b" stroke="#0c1b2b" stroke-width="0.25">php</text></svg><div style="position:absolute;left:777.5px;top:100.2px;height:22px;line-height:22px;font-family:'Liberation Sans', sans-serif;font-size:16px;font-weight:normal;color:#a9a9a9;white-space:pre;transform:scaleX(1.0427);transform-origin:0 0;">AttributeController.php</div><svg style="position:absolute;left:951.5px;top:103px;" width="8" height="14" viewBox="0 0 8 14" fill="none"><path d="M1 1 L6.5 7 L1 13" stroke="#a9a9a9" stroke-width="1.2"/></svg><div style="position:absolute;left:965.3px;top:100.2px;height:22px;line-height:22px;font-family:'Liberation Sans', sans-serif;font-size:16px;font-weight:normal;color:#a9a9a9;white-space:pre;transform:scaleX(0.8600);transform-origin:0 0;">PHP</div><svg style="position:absolute;left:1001.5px;top:103px;" width="8" height="14" viewBox="0 0 8 14" fill="none"><path d="M1 1 L6.5 7 L1 13" stroke="#a9a9a9" stroke-width="1.2"/></svg><svg style="position:absolute;left:1015px;top:101px;" width="19" height="19" viewBox="0 0 19 19" fill="none"><rect x="1.4" y="1.6" width="8" height="3.8" rx="0.6" transform="rotate(-45 5.4 3.5)" stroke="#ee9d28" stroke-width="1.3"/><rect x="13.5" y="5" width="5" height="3.2" rx="0.5" transform="rotate(-45 16 6.6)" stroke="#ee9d28" stroke-width="1.3"/><rect x="13" y="11.8" width="5" height="3.2" rx="0.5" transform="rotate(-45 15.5 13.4)" stroke="#ee9d28" stroke-width="1.3"/><path d="M6.4 6.8 V13.4 H12.6 M6.4 7.4 H13.4" stroke="#ee9d28" stroke-width="1.3"/></svg><div style="position:absolute;left:1038.8px;top:100.2px;height:22px;line-height:22px;font-family:'Liberation Sans', sans-serif;font-size:16px;font-weight:normal;color:#a9a9a9;white-space:pre;transform:scaleX(1.0360);transform-origin:0 0;">AttributeController</div><svg style="position:absolute;left:1180.5px;top:103px;" width="8" height="14" viewBox="0 0 8 14" fill="none"><path d="M1 1 L6.5 7 L1 13" stroke="#a9a9a9" stroke-width="1.2"/></svg><svg style="position:absolute;left:1195px;top:101px;" width="17" height="19" viewBox="0 0 17 19" fill="none"><path d="M8.5 1.5 L15.5 5 V13.5 L8.5 17.5 L1.5 13.5 V5 Z M1.5 5 L8.5 9 L15.5 5 M8.5 9 V17.5" stroke="#b180d7" stroke-width="1.4" stroke-linejoin="round"/></svg><div style="position:absolute;left:1217.7px;top:100.2px;height:22px;line-height:22px;font-family:'Liberation Sans', sans-serif;font-size:16px;font-weight:normal;color:#a9a9a9;white-space:pre;transform:scaleX(0.9806);transform-origin:0 0;">delete()</div><div style="position:absolute;left:506px;top:695.5px;width:1397px;height:23.75px;border:2px solid #282828;"></div><div style="position:absolute;left:766.2535px;top:695.5px;width:211.651px;height:23.75px;background:#484848;"></div><div style="position:absolute;left:756.633px;top:695.5px;width:9.6205px;height:23.75px;border:1px solid #7a7a7a;"></div><div style="position:absolute;left:1064.489px;top:695.5px;width:9.6205px;height:23.75px;border:1px solid #7a7a7a;"></div><div style="position:absolute;left:506.5px;top:123px;width:1.2px;height:112.5px;background:#404040;"></div><div style="position:absolute;left:506.5px;top:255.5px;width:1.2px;height:142.5px;background:#404040;"></div><div style="position:absolute;left:506.5px;top:418.0px;width:1.2px;height:118.75px;background:#404040;"></div><div style="position:absolute;left:506.5px;top:556.75px;width:1.2px;height:118.75px;background:#404040;"></div><div style="position:absolute;left:506.5px;top:695.5px;width:1.2px;height:95.0px;background:#404040;"></div><div style="position:absolute;left:544.982px;top:279.25px;width:1.2px;height:71.25px;background:#404040;"></div><div style="position:absolute;left:544.982px;top:441.75px;width:1.2px;height:47.5px;background:#404040;"></div><div style="position:absolute;left:544.982px;top:580.5px;width:1.2px;height:47.5px;background:#404040;"></div><div style="position:absolute;left:544.982px;top:719.25px;width:1.2px;height:47.5px;background:#707070;"></div><div style="position:absolute;left:506.5px;top:166.95px;height:23.75px;line-height:23.75px;font-family:'Liberation Mono', monospace;font-size:16.05px;white-space:pre;color:#d4d4d4;"></div><div style="position:absolute;left:433px;width:41px;text-align:right;top:166.95px;height:23.75px;line-height:23.75px;font-family:'Liberation Mono', monospace;font-size:16.05px;white-space:pre;color:#6e7681;">20</div><div style="position:absolute;left:506.5px;top:190.7px;height:23.75px;line-height:23.75px;font-family:'Liberation Mono', monospace;font-size:16.05px;white-space:pre;color:#d4d4d4;"><span style="color:#d4d4d4">    </span><span style="color:#da70d6">}</span></div><div style="position:absolute;left:433px;width:41px;text-align:right;top:190.7px;height:23.75px;line-height:23.75px;font-family:'Liberation Mono', monospace;font-size:16.05px;white-space:pre;color:#6e7681;">21</div><div style="position:absolute;left:506.5px;top:214.45px;height:23.75px;line-height:23.75px;font-family:'Liberation Mono', monospace;font-size:16.05px;white-space:pre;color:#d4d4d4;"></div><div style="position:absolute;left:433px;width:41px;text-align:right;top:214.45px;height:23.75px;line-height:23.75px;font-family:'Liberation Mono', monospace;font-size:16.05px;white-space:pre;color:#6e7681;">22</div><div style="position:absolute;left:506.5px;top:258.2px;height:23.75px;line-height:23.75px;font-family:'Liberation Mono', monospace;font-size:16.05px;white-space:pre;color:#d4d4d4;"><span style="color:#d4d4d4">    </span><span style="color:#569cd6">public</span><span style="color:#d4d4d4"> </span><span style="color:#569cd6">function</span><span style="color:#d4d4d4"> </span><span style="color:#dcdcaa">getAll</span><span style="color:#da70d6">()</span><span style="color:#d4d4d4"> </span><span style="color:#da70d6">{</span></div><div style="position:absolute;left:433px;width:41px;text-align:right;top:258.2px;height:23.75px;line-height:23.75px;font-family:'Liberation Mono', monospace;font-size:16.05px;white-space:pre;color:#6e7681;">23</div><div style="position:absolute;left:506.5px;top:281.95px;height:23.75px;line-height:23.75px;font-family:'Liberation Mono', monospace;font-size:16.05px;white-space:pre;color:#d4d4d4;"><span style="color:#d4d4d4">        </span><span style="color:#9cdcfe">$data</span><span style="color:#d4d4d4"> = </span><span style="color:#569cd6">$this</span><span style="color:#d4d4d4">-&gt;</span><span style="color:#9cdcfe">service</span><span style="color:#d4d4d4">-&gt;</span><span style="color:#dcdcaa">getAll</span><span style="color:#179fff">(</span><span style="color:#9cdcfe">$is_paginate</span><span style="color:#d4d4d4"> = </span><span style="color:#569cd6">true</span><span style="color:#179fff">)</span><span style="color:#d4d4d4">;</span></div><div style="position:absolute;left:433px;width:41px;text-align:right;top:281.95px;height:23.75px;line-height:23.75px;font-family:'Liberation Mono', monospace;font-size:16.05px;white-space:pre;color:#6e7681;">24</div><div style="position:absolute;left:506.5px;top:305.7px;height:23.75px;line-height:23.75px;font-family:'Liberation Mono', monospace;font-size:16.05px;white-space:pre;color:#d4d4d4;"><span style="color:#d4d4d4">        </span><span style="color:#9cdcfe">$response</span><span style="color:#d4d4d4"> = </span><span style="color:#4ec9b0">GetAllAttributeResource</span><span style="color:#d4d4d4">::</span><span style="color:#dcdcaa">collection</span><span style="color:#179fff">(</span><span style="color:#9cdcfe">$data</span><span style="color:#179fff">)</span><span style="color:#d4d4d4">;</span></div><div style="position:absolute;left:433px;width:41px;text-align:right;top:305.7px;height:23.75px;line-height:23.75px;font-family:'Liberation Mono', monospace;font-size:16.05px;white-space:pre;color:#6e7681;">25</div><div style="position:absolute;left:506.5px;top:329.45px;height:23.75px;line-height:23.75px;font-family:'Liberation Mono', monospace;font-size:16.05px;white-space:pre;color:#d4d4d4;"><span style="color:#d4d4d4">        </span><span style="color:#c586c0">return</span><span style="color:#d4d4d4"> </span><span style="color:#dcdcaa">response</span><span style="color:#179fff">()</span><span style="color:#d4d4d4">-&gt;</span><span style="color:#dcdcaa">json</span><span style="color:#179fff">(</span><span style="color:#9cdcfe">$response</span><span style="color:#179fff">)</span><span style="color:#d4d4d4">;</span></div><div style="position:absolute;left:433px;width:41px;text-align:right;top:329.45px;height:23.75px;line-height:23.75px;font-family:'Liberation Mono', monospace;font-size:16.05px;white-space:pre;color:#6e7681;">26</div><div style="position:absolute;left:506.5px;top:353.2px;height:23.75px;line-height:23.75px;font-family:'Liberation Mono', monospace;font-size:16.05px;white-space:pre;color:#d4d4d4;"><span style="color:#d4d4d4">    </span><span style="color:#da70d6">}</span></div><div style="position:absolute;left:433px;width:41px;text-align:right;top:353.2px;height:23.75px;line-height:23.75px;font-family:'Liberation Mono', monospace;font-size:16.05px;white-space:pre;color:#6e7681;">27</div><div style="position:absolute;left:506.5px;top:376.95px;height:23.75px;line-height:23.75px;font-family:'Liberation Mono', monospace;font-size:16.05px;white-space:pre;color:#d4d4d4;"></div><div style="position:absolute;left:433px;width:41px;text-align:right;top:376.95px;height:23.75px;line-height:23.75px;font-family:'Liberation Mono', monospace;font-size:16.05px;white-space:pre;color:#6e7681;">28</div><div style="position:absolute;left:506.5px;top:420.7px;height:23.75px;line-height:23.75px;font-family:'Liberation Mono', monospace;font-size:16.05px;white-space:pre;color:#d4d4d4;"><span style="color:#d4d4d4">    </span><span style="color:#569cd6">public</span><span style="color:#d4d4d4"> </span><span style="color:#569cd6">function</span><span style="color:#d4d4d4"> </span><span style="color:#dcdcaa">create</span><span style="color:#da70d6">(</span><span style="color:#4ec9b0">CreateAttributeRequest</span><span style="color:#d4d4d4"> </span><span style="color:#9cdcfe">$request</span><span style="color:#da70d6">)</span><span style="color:#d4d4d4"> </span><span style="color:#da70d6">{</span></div><div style="position:absolute;left:433px;width:41px;text-align:right;top:420.7px;height:23.75px;line-height:23.75px;font-family:'Liberation Mono', monospace;font-size:16.05px;white-space:pre;color:#6e7681;">29</div><div style="position:absolute;left:506.5px;top:444.45px;height:23.75px;line-height:23.75px;font-family:'Liberation Mono', monospace;font-size:16.05px;white-space:pre;color:#d4d4d4;"><span style="color:#d4d4d4">        </span><span style="color:#9cdcfe">$data</span><span style="color:#d4d4d4"> = </span><span style="color:#569cd6">$this</span><span style="color:#d4d4d4">-&gt;</span><span style="color:#9cdcfe">service</span><span style="color:#d4d4d4">-&gt;</span><span style="color:#dcdcaa">create</span><span style="color:#179fff">(</span><span style="color:#9cdcfe">$request</span><span style="color:#d4d4d4">-&gt;</span><span style="color:#dcdcaa">validated</span><span style="color:#ffd700">()</span><span style="color:#179fff">)</span><span style="color:#d4d4d4">;</span></div><div style="position:absolute;left:433px;width:41px;text-align:right;top:444.45px;height:23.75px;line-height:23.75px;font-family:'Liberation Mono', monospace;font-size:16.05px;white-space:pre;color:#6e7681;">30</div><div style="position:absolute;left:506.5px;top:468.2px;height:23.75px;line-height:23.75px;font-family:'Liberation Mono', monospace;font-size:16.05px;white-space:pre;color:#d4d4d4;"><span style="color:#d4d4d4">        </span><span style="color:#c586c0">return</span><span style="color:#d4d4d4"> </span><span style="color:#dcdcaa">response</span><span style="color:#179fff">()</span><span style="color:#d4d4d4">-&gt;</span><span style="color:#dcdcaa">json</span><span style="color:#179fff">(</span><span style="color:#9cdcfe">$data</span><span style="color:#179fff">)</span><span style="color:#d4d4d4">;</span></div><div style="position:absolute;left:433px;width:41px;text-align:right;top:468.2px;height:23.75px;line-height:23.75px;font-family:'Liberation Mono', monospace;font-size:16.05px;white-space:pre;color:#6e7681;">31</div><div style="position:absolute;left:506.5px;top:491.95px;height:23.75px;line-height:23.75px;font-family:'Liberation Mono', monospace;font-size:16.05px;white-space:pre;color:#d4d4d4;"><span style="color:#d4d4d4">    </span><span style="color:#da70d6">}</span></div><div style="position:absolute;left:433px;width:41px;text-align:right;top:491.95px;height:23.75px;line-height:23.75px;font-family:'Liberation Mono', monospace;font-size:16.05px;white-space:pre;color:#6e7681;">32</div><div style="position:absolute;left:506.5px;top:515.7px;height:23.75px;line-height:23.75px;font-family:'Liberation Mono', monospace;font-size:16.05px;white-space:pre;color:#d4d4d4;"></div><div style="position:absolute;left:433px;width:41px;text-align:right;top:515.7px;height:23.75px;line-height:23.75px;font-family:'Liberation Mono', monospace;font-size:16.05px;white-space:pre;color:#6e7681;">33</div><div style="position:absolute;left:506.5px;top:559.45px;height:23.75px;line-height:23.75px;font-family:'Liberation Mono', monospace;font-size:16.05px;white-space:pre;color:#d4d4d4;"><span style="color:#d4d4d4">    </span><span style="color:#569cd6">public</span><span style="color:#d4d4d4"> </span><span style="color:#569cd6">function</span><span style="color:#d4d4d4"> </span><span style="color:#dcdcaa">update</span><span style="color:#da70d6">(</span><span style="color:#4ec9b0">UpdateAttributeRequest</span><span style="color:#d4d4d4"> </span><span style="color:#9cdcfe">$request</span><span style="color:#d4d4d4">,</span><span style="color:#9cdcfe">$id</span><span style="color:#da70d6">)</span><span style="color:#d4d4d4"> </span><span style="color:#da70d6">{</span></div><div style="position:absolute;left:433px;width:41px;text-align:right;top:559.45px;height:23.75px;line-height:23.75px;font-family:'Liberation Mono', monospace;font-size:16.05px;white-space:pre;color:#6e7681;">34</div><div style="position:absolute;left:506.5px;top:583.2px;height:23.75px;line-height:23.75px;font-family:'Liberation Mono', monospace;font-size:16.05px;white-space:pre;color:#d4d4d4;"><span style="color:#d4d4d4">        </span><span style="color:#9cdcfe">$data</span><span style="color:#d4d4d4"> = </span><span style="color:#569cd6">$this</span><span style="color:#d4d4d4">-&gt;</span><span style="color:#9cdcfe">service</span><span style="color:#d4d4d4">-&gt;</span><span style="color:#dcdcaa">updateAttribute</span><span style="color:#179fff">(</span><span style="color:#9cdcfe">$id</span><span style="color:#d4d4d4">, </span><span style="color:#9cdcfe">$request</span><span style="color:#d4d4d4">-&gt;</span><span style="color:#dcdcaa">validated</span><span style="color:#ffd700">()</span><span style="color:#179fff">)</span><span style="color:#d4d4d4">;</span></div><div style="position:absolute;left:433px;width:41px;text-align:right;top:583.2px;height:23.75px;line-height:23.75px;font-family:'Liberation Mono', monospace;font-size:16.05px;white-space:pre;color:#6e7681;">35</div><div style="position:absolute;left:506.5px;top:606.95px;height:23.75px;line-height:23.75px;font-family:'Liberation Mono', monospace;font-size:16.05px;white-space:pre;color:#d4d4d4;"><span style="color:#d4d4d4">        </span><span style="color:#c586c0">return</span><span style="color:#d4d4d4"> </span><span style="color:#dcdcaa">response</span><span style="color:#179fff">()</span><span style="color:#d4d4d4">-&gt;</span><span style="color:#dcdcaa">json</span><span style="color:#179fff">(</span><span style="color:#9cdcfe">$data</span><span style="color:#179fff">)</span><span style="color:#d4d4d4">;</span></div><div style="position:absolute;left:433px;width:41px;text-align:right;top:606.95px;height:23.75px;line-height:23.75px;font-family:'Liberation Mono', monospace;font-size:16.05px;white-space:pre;color:#6e7681;">36</div><div style="position:absolute;left:506.5px;top:630.7px;height:23.75px;line-height:23.75px;font-family:'Liberation Mono', monospace;font-size:16.05px;white-space:pre;color:#d4d4d4;"><span style="color:#d4d4d4">    </span><span style="color:#da70d6">}</span></div><div style="position:absolute;left:433px;width:41px;text-align:right;top:630.7px;height:23.75px;line-height:23.75px;font-family:'Liberation Mono', monospace;font-size:16.05px;white-space:pre;color:#6e7681;">37</div><div style="position:absolute;left:506.5px;top:654.45px;height:23.75px;line-height:23.75px;font-family:'Liberation Mono', monospace;font-size:16.05px;white-space:pre;color:#d4d4d4;"></div><div style="position:absolute;left:433px;width:41px;text-align:right;top:654.45px;height:23.75px;line-height:23.75px;font-family:'Liberation Mono', monospace;font-size:16.05px;white-space:pre;color:#6e7681;">38</div><div style="position:absolute;left:506.5px;top:698.2px;height:23.75px;line-height:23.75px;font-family:'Liberation Mono', monospace;font-size:16.05px;white-space:pre;color:#d4d4d4;"><span style="color:#d4d4d4">    </span><span style="color:#569cd6">public</span><span style="color:#d4d4d4"> </span><span style="color:#569cd6">function</span><span style="color:#d4d4d4"> </span><span style="color:#dcdcaa">delete</span><span style="color:#da70d6">(</span><span style="color:#4ec9b0">DeleteAttributeRequest</span><span style="color:#d4d4d4"> </span><span style="color:#9cdcfe">$request</span><span style="color:#da70d6">)</span><span style="color:#d4d4d4"> </span><span style="color:#da70d6">{</span></div><div style="position:absolute;left:433px;width:41px;text-align:right;top:698.2px;height:23.75px;line-height:23.75px;font-family:'Liberation Mono', monospace;font-size:16.05px;white-space:pre;color:#cccccc;">39</div><div style="position:absolute;left:506.5px;top:721.95px;height:23.75px;line-height:23.75px;font-family:'Liberation Mono', monospace;font-size:16.05px;white-space:pre;color:#d4d4d4;"><span style="color:#d4d4d4">        </span><span style="color:#9cdcfe">$data</span><span style="color:#d4d4d4"> = </span><span style="color:#569cd6">$this</span><span style="color:#d4d4d4">-&gt;</span><span style="color:#9cdcfe">service</span><span style="color:#d4d4d4">-&gt;</span><span style="color:#dcdcaa">deleteAttribute</span><span style="color:#179fff">(</span><span style="color:#9cdcfe">$request</span><span style="color:#d4d4d4">-&gt;</span><span style="color:#9cdcfe">id</span><span style="color:#179fff">)</span><span style="color:#d4d4d4">;</span></div><div style="position:absolute;left:433px;width:41px;text-align:right;top:721.95px;height:23.75px;line-height:23.75px;font-family:'Liberation Mono', monospace;font-size:16.05px;white-space:pre;color:#6e7681;">40</div><div style="position:absolute;left:506.5px;top:745.7px;height:23.75px;line-height:23.75px;font-family:'Liberation Mono', monospace;font-size:16.05px;white-space:pre;color:#d4d4d4;"><span style="color:#d4d4d4">        </span><span style="color:#c586c0">return</span><span style="color:#d4d4d4"> </span><span style="color:#dcdcaa">response</span><span style="color:#179fff">()</span><span style="color:#d4d4d4">-&gt;</span><span style="color:#dcdcaa">json</span><span style="color:#179fff">(</span><span style="color:#9cdcfe">$data</span><span style="color:#179fff">)</span><span style="color:#d4d4d4">;</span></div><div style="position:absolute;left:433px;width:41px;text-align:right;top:745.7px;height:23.75px;line-height:23.75px;font-family:'Liberation Mono', monospace;font-size:16.05px;white-space:pre;color:#6e7681;">41</div><div style="position:absolute;left:506.5px;top:769.45px;height:23.75px;line-height:23.75px;font-family:'Liberation Mono', monospace;font-size:16.05px;white-space:pre;color:#d4d4d4;"><span style="color:#d4d4d4">    </span><span style="color:#da70d6">}</span></div><div style="position:absolute;left:433px;width:41px;text-align:right;top:769.45px;height:23.75px;line-height:23.75px;font-family:'Liberation Mono', monospace;font-size:16.05px;white-space:pre;color:#6e7681;">42</div><div style="position:absolute;left:506.5px;top:793.2px;height:23.75px;line-height:23.75px;font-family:'Liberation Mono', monospace;font-size:16.05px;white-space:pre;color:#d4d4d4;"><span style="color:#ffd700">}</span></div><div style="position:absolute;left:433px;width:41px;text-align:right;top:793.2px;height:23.75px;line-height:23.75px;font-family:'Liberation Mono', monospace;font-size:16.05px;white-space:pre;color:#6e7681;">43</div><div style="position:absolute;left:544.982px;top:236.8px;height:20px;line-height:20px;font-family:'Liberation Sans', sans-serif;font-size:14px;font-weight:normal;color:#999999;white-space:pre;transform:scaleX(1.0391);transform-origin:0 0;">0 references | 0 overrides</div><div style="position:absolute;left:544.982px;top:399.3px;height:20px;line-height:20px;font-family:'Liberation Sans', sans-serif;font-size:14px;font-weight:normal;color:#999999;white-space:pre;transform:scaleX(1.0391);transform-origin:0 0;">0 references | 0 overrides</div><div style="position:absolute;left:544.982px;top:538.05px;height:20px;line-height:20px;font-family:'Liberation Sans', sans-serif;font-size:14px;font-weight:normal;color:#999999;white-space:pre;transform:scaleX(1.0391);transform-origin:0 0;">0 references | 0 overrides</div><div style="position:absolute;left:544.982px;top:676.8px;height:20px;line-height:20px;font-family:'Liberation Sans', sans-serif;font-size:14px;font-weight:normal;color:#999999;white-space:pre;transform:scaleX(1.0391);transform-origin:0 0;">0 references | 0 overrides</div><svg style="position:absolute;left:480px;top:164.25px;" width="4" height="23.75" viewBox="0 0 4 23.75" fill="none"><defs><pattern id="st164" width="4" height="4" patternUnits="userSpaceOnUse" patternTransform="rotate(-45)"><rect width="2" height="4" fill="#1c8ae6"/></pattern></defs><rect width="4" height="23.75" fill="url(#st164)"/></svg><svg style="position:absolute;left:480px;top:279.25px;" width="4" height="23.75" viewBox="0 0 4 23.75" fill="none"><defs><pattern id="st279" width="4" height="4" patternUnits="userSpaceOnUse" patternTransform="rotate(-45)"><rect width="2" height="4" fill="#1c8ae6"/></pattern></defs><rect width="4" height="23.75" fill="url(#st279)"/></svg><svg style="position:absolute;left:480px;top:719.25px;" width="4" height="23.75" viewBox="0 0 4 23.75" fill="none"><defs><pattern id="st719" width="4" height="4" patternUnits="userSpaceOnUse" patternTransform="rotate(-45)"><rect width="2" height="4" fill="#1c8ae6"/></pattern></defs><rect width="4" height="23.75" fill="url(#st719)"/></svg><svg style="position:absolute;left:510px;top:697px;" width="14" height="18" viewBox="0 0 14 18" fill="none"><circle cx="6.5" cy="6.5" r="6" fill="#ffcc00"/><rect x="3.5" y="10" width="6" height="7" fill="#ffcc00"/><rect x="5.3" y="12.3" width="2.4" height="2.6" fill="#1f1f1f"/></svg><div style="position:absolute;left:1154.5px;top:698.2px;height:23.75px;line-height:23.75px;font-family:'Liberation Mono', monospace;font-size:16.05px;font-weight:normal;color:#585858;white-space:pre;">You, 8 hours ago • attrebuite api</div><div style="position:absolute;left:421px;top:123px;width:1480px;height:48px;background:#1f1f1f;"></div><div style="position:absolute;left:421px;top:171px;width:1480px;height:3px;background:linear-gradient(rgba(0,0,0,0.85),rgba(0,0,0,0));"></div><div style="position:absolute;left:506.5px;top:125.7px;height:23.75px;line-height:23.75px;font-family:'Liberation Mono', monospace;font-size:16.05px;white-space:pre;color:#d4d4d4;"><span style="color:#569cd6">class</span><span style="color:#d4d4d4"> </span><span style="color:#4ec9b0">AttributeController</span><span style="color:#d4d4d4"> </span><span style="color:#569cd6">extends</span><span style="color:#d4d4d4"> </span><span style="color:#4ec9b0">Controller</span></div><div style="position:absolute;left:433px;width:41px;text-align:right;top:125.7px;height:23.75px;line-height:23.75px;font-family:'Liberation Mono', monospace;font-size:16.05px;white-space:pre;color:#6e7681;">17</div><div style="position:absolute;left:506.5px;top:149.45px;height:23.75px;line-height:23.75px;font-family:'Liberation Mono', monospace;font-size:16.05px;white-space:pre;color:#d4d4d4;"><span style="color:#d4d4d4">    </span><span style="color:#569cd6">public</span><span style="color:#d4d4d4"> </span><span style="color:#569cd6">function</span><span style="color:#d4d4d4"> </span><span style="color:#dcdcaa">__construct</span><span style="color:#da70d6">(</span><span style="color:#569cd6">private</span><span style="color:#d4d4d4"> </span><span style="color:#4ec9b0">AttributeService</span><span style="color:#d4d4d4"> </span><span style="color:#9cdcfe">$service</span><span style="color:#da70d6">)</span><span style="color:#d4d4d4"> </span><span style="color:#da70d6">{</span></div><div style="position:absolute;left:433px;width:41px;text-align:right;top:149.45px;height:23.75px;line-height:23.75px;font-family:'Liberation Mono', monospace;font-size:16.05px;white-space:pre;color:#6e7681;">19</div><div style="position:absolute;left:1903px;top:123px;width:16px;height:928px;background:#1f1f1f;box-shadow:-2px 0 3px rgba(0,0,0,0.6);"></div><div style="position:absolute;left:1903px;top:335px;width:16px;height:416px;background:#464646;"></div><div style="position:absolute;left:1904px;top:353px;width:5px;height:11px;background:#3c6e9c;"></div><div style="position:absolute;left:1904px;top:405px;width:5px;height:10px;background:#3c6e9c;"></div><div style="position:absolute;left:1904px;top:602px;width:5px;height:11px;background:#3c6e9c;"></div><div style="position:absolute;left:1905px;top:591px;width:14px;height:2px;background:#8a8a8a;"></div><div style="position:absolute;left:1909px;top:591px;width:6px;height:11px;background:#8a8a8a;"></div><div style="position:absolute;left:0px;top:1052.5px;width:43px;height:26.5px;background:#0078d4;"></div><svg style="position:absolute;left:13px;top:1055px;" width="18" height="20" viewBox="0 0 18 20" fill="none"><path d="M3.1 5.8 L8.2 10.7 L3.1 15.7 M13.8 1.3 L8.8 6.2 L13.8 11" stroke="#ffffff" stroke-width="1.4"/></svg><svg style="position:absolute;left:51px;top:1055px;" width="16" height="19" viewBox="0 0 16 19" fill="none"><circle cx="3.5" cy="3" r="2.2" stroke="#cccccc" stroke-width="1.3"/><circle cx="3.5" cy="16" r="2.2" stroke="#cccccc" stroke-width="1.3"/><circle cx="12.5" cy="6" r="2.2" stroke="#cccccc" stroke-width="1.3"/><path d="M3.5 5.2 V13.8 M12.5 8.2 Q12.5 12 4.8 14" stroke="#cccccc" stroke-width="1.3"/></svg><div style="position:absolute;left:71.9px;top:1053.5px;height:22px;line-height:22px;font-family:'Liberation Sans', sans-serif;font-size:15px;font-weight:normal;color:#cccccc;white-space:pre;transform:scaleX(0.9884);transform-origin:0 0;">product_module_moaz*</div><svg style="position:absolute;left:237px;top:1057px;" width="18" height="16" viewBox="0 0 18 16" fill="none"><path d="M5 12.5 H4 Q1 12.5 1 9.5 Q1 6.5 4 6.5 Q4.5 2 9 2 Q13.5 2 14 6.5 Q17 6.5 17 9.5 Q17 12.5 14 12.5 H13" stroke="#cccccc" stroke-width="1.3"/><path d="M9 15.5 V7.5 M6 10.5 L9 7.5 L12 10.5" stroke="#cccccc" stroke-width="1.3"/></svg><svg style="position:absolute;left:271px;top:1055px;" width="18" height="20" viewBox="0 0 18 20" fill="none"><circle cx="5" cy="3" r="2.2" stroke="#cccccc" stroke-width="1.3"/><circle cx="5" cy="17" r="2.2" stroke="#cccccc" stroke-width="1.3"/><circle cx="13.5" cy="10" r="2.2" stroke="#cccccc" stroke-width="1.3"/><path d="M5 5.2 V14.8 M8 1 V19 M5 10 H11.3" stroke="#cccccc" stroke-width="1.3"/></svg><svg style="position:absolute;left:308px;top:1055px;" width="18" height="19" viewBox="0 0 18 19" fill="none"><path d="M5 12 L2 10 Q4 6 8 7 Q12 1 17 1 Q17 6 11 10 Q12 14 8 16 L6 13 Z" stroke="#cccccc" stroke-width="1.3" stroke-linejoin="round"/><path d="M4 14 L1.5 17.5 M6 15 L4 18" stroke="#cccccc" stroke-width="1.3"/></svg><svg style="position:absolute;left:326px;top:1055px;" width="18" height="19" viewBox="0 0 18 19" fill="none"><path d="M1.5 17.5 L5 14 M7 9 L9 11 M10 6 L12 8 M5 10 L9 14 Q11 12 13 12 L15.5 9.5 L9.5 3.5 L7 6 Q7 8 5 10 Z M13 6 L17 2" stroke="#cccccc" stroke-width="1.3" stroke-linejoin="round"/></svg><div style="position:absolute;left:348.5px;top:1053.5px;height:22px;line-height:22px;font-family:'Liberation Sans', sans-serif;font-size:15px;font-weight:normal;color:#cccccc;white-space:pre;transform:scaleX(0.9630);transform-origin:0 0;">Launchpad</div><svg style="position:absolute;left:441px;top:1056px;" width="17" height="17" viewBox="0 0 17 17" fill="none"><circle cx="8.5" cy="8.5" r="7.5" stroke="#cccccc" stroke-width="1.3"/><path d="M5.5 5.5 L11.5 11.5 M11.5 5.5 L5.5 11.5" stroke="#cccccc" stroke-width="1.3"/></svg><div style="position:absolute;left:462.6px;top:1053.5px;height:22px;line-height:22px;font-family:'Liberation Sans', sans-serif;font-size:15px;font-weight:normal;color:#cccccc;white-space:pre;transform:scaleX(0.9588);transform-origin:0 0;">0</div><svg style="position:absolute;left:475px;top:1056px;" width="18" height="17" viewBox="0 0 18 17" fill="none"><path d="M9 1.5 L17 15.5 H1 Z" stroke="#cccccc" stroke-width="1.3" stroke-linejoin="round"/><path d="M9 6 V11 M9 12.5 V14" stroke="#cccccc" stroke-width="1.3"/></svg><div style="position:absolute;left:495.8px;top:1053.5px;height:22px;line-height:22px;font-family:'Liberation Sans', sans-serif;font-size:15px;font-weight:normal;color:#cccccc;white-space:pre;transform:scaleX(0.9588);transform-origin:0 0;">0</div><svg style="position:absolute;left:525px;top:1055px;" width="18" height="19" viewBox="0 0 18 19" fill="none"><circle cx="9" cy="7" r="1.6" fill="#cccccc"/><path d="M9 8.5 L5 18 M9 8.5 L13 18 M6.5 14 H11.5 M5.5 3.5 Q3.5 7 5.5 10.5 M12.5 3.5 Q14.5 7 12.5 10.5 M3 1.5 Q0 7 3 12.5 M15 1.5 Q18 7 15 12.5" stroke="#cccccc" stroke-width="1.3"/></svg><div style="position:absolute;left:545.7px;top:1053.5px;height:22px;line-height:22px;font-family:'Liberation Sans', sans-serif;font-size:15px;font-weight:normal;color:#cccccc;white-space:pre;transform:scaleX(0.9588);transform-origin:0 0;">0</div><svg style="position:absolute;left:1092px;top:1055px;" width="13" height="19" viewBox="0 0 13 19" fill="none"><circle cx="6.5" cy="9.5" r="3.6" stroke="#cccccc" stroke-width="1.4"/><path d="M6.5 1 V5.9 M6.5 13.1 V18" stroke="#cccccc" stroke-width="1.4"/></svg><div style="position:absolute;left:1111.5px;top:1053.5px;height:22px;line-height:22px;font-family:'Liberation Sans', sans-serif;font-size:15px;font-weight:normal;color:#cccccc;white-space:pre;transform:scaleX(0.9798);transform-origin:0 0;">You, 8 hours ago</div><svg style="position:absolute;left:1242px;top:1056px;" width="18" height="18" viewBox="0 0 18 18" fill="none"><circle cx="9" cy="9" r="7.6" stroke="#cccccc" stroke-width="1.4"/><rect x="6" y="6" width="6" height="6" rx="1" fill="#cccccc"/></svg><div style="position:absolute;left:1263.6px;top:1053.5px;height:22px;line-height:22px;font-family:'Liberation Sans', sans-serif;font-size:15px;font-weight:normal;color:#cccccc;white-space:pre;transform:scaleX(0.9930);transform-origin:0 0;">Vite</div><div style="position:absolute;left:1309.6px;top:1053.5px;height:22px;line-height:22px;font-family:'Liberation Sans', sans-serif;font-size:15px;font-weight:normal;color:#cccccc;white-space:pre;transform:scaleX(0.9548);transform-origin:0 0;">Ln 39, Col 42</div><div style="position:absolute;left:1414.5px;top:1053.5px;height:22px;line-height:22px;font-family:'Liberation Sans', sans-serif;font-size:15px;font-weight:normal;color:#cccccc;white-space:pre;transform:scaleX(0.9173);transform-origin:0 0;">Spaces: 4</div><div style="position:absolute;left:1496.3px;top:1053.5px;height:22px;line-height:22px;font-family:'Liberation Sans', sans-serif;font-size:15px;font-weight:normal;color:#cccccc;white-space:pre;transform:scaleX(0.9247);transform-origin:0 0;">UTF-8</div><div style="position:absolute;left:1555.7px;top:1053.5px;height:22px;line-height:22px;font-family:'Liberation Sans', sans-serif;font-size:15px;font-weight:normal;color:#cccccc;white-space:pre;transform:scaleX(0.7993);transform-origin:0 0;">LF</div><svg style="position:absolute;left:1588px;top:1055px;" width="18" height="19" viewBox="0 0 18 19" fill="none"><path d="M5 2 Q2.5 2 2.5 4.5 V7.5 Q2.5 9.5 1 9.5 Q2.5 9.5 2.5 11.5 V14.5 Q2.5 17 5 17 M13 2 Q15.5 2 15.5 4.5 V7" stroke="#cccccc" stroke-width="1.3"/><circle cx="12.5" cy="13" r="3.6" stroke="#cccccc" stroke-width="1.3"/><path d="M11 11.5 L14 14.5 M14 11.5 L11 14.5" stroke="#cccccc" stroke-width="1.1"/></svg><div style="position:absolute;left:1612.6px;top:1053.5px;height:22px;line-height:22px;font-family:'Liberation Sans', sans-serif;font-size:15px;font-weight:normal;color:#cccccc;white-space:pre;transform:scaleX(0.8786);transform-origin:0 0;">PHP</div><div style="position:absolute;left:1657.2px;top:1053.5px;height:22px;line-height:22px;font-family:'Liberation Sans', sans-serif;font-size:15px;font-weight:normal;color:#cccccc;white-space:pre;transform:scaleX(0.9444);transform-origin:0 0;">8.2</div><svg style="position:absolute;left:1695px;top:1055px;" width="20" height="19" viewBox="0 0 20 19" fill="none"><circle cx="13.5" cy="6" r="4.5" stroke="#cccccc" stroke-width="1.4"/><path d="M10.3 9.2 L1.5 18 M4 15.5 L6.5 18 M6.5 13 L8.5 15" stroke="#cccccc" stroke-width="1.4"/></svg><svg style="position:absolute;left:1735px;top:1057px;" width="15" height="13" viewBox="0 0 15 13" fill="none"><path d="M1 7 L5 11.5 L14 1" stroke="#cccccc" stroke-width="1.5"/></svg><div style="position:absolute;left:1755.6px;top:1053.5px;height:22px;line-height:22px;font-family:'Liberation Sans', sans-serif;font-size:15px;font-weight:normal;color:#cccccc;white-space:pre;transform:scaleX(0.9563);transform-origin:0 0;">Spell</div><div style="position:absolute;left:1811.5px;top:1058px;width:2px;height:12px;background:#cccccc;"></div><div style="position:absolute;left:1818.5px;top:1058px;width:2px;height:12px;background:#cccccc;"></div><div style="position:absolute;left:1830px;top:1053.5px;height:22px;line-height:22px;font-family:'Liberation Sans', sans-serif;font-size:15px;font-weight:normal;color:#cccccc;white-space:pre;transform:scaleX(0.9565);transform-origin:0 0;">Ninja</div><svg style="position:absolute;left:1884px;top:1055px;" width="17" height="19" viewBox="0 0 17 19" fill="none"><path d="M3 14 V8 Q3 2.5 8.5 2.5 Q14 2.5 14 8 V14 L16 16 H1 Z" stroke="#cccccc" stroke-width="1.3" stroke-linejoin="round"/><path d="M6.5 17.5 Q8.5 19.5 10.5 17.5" stroke="#cccccc" stroke-width="1.3"/></svg>
</body></html>
